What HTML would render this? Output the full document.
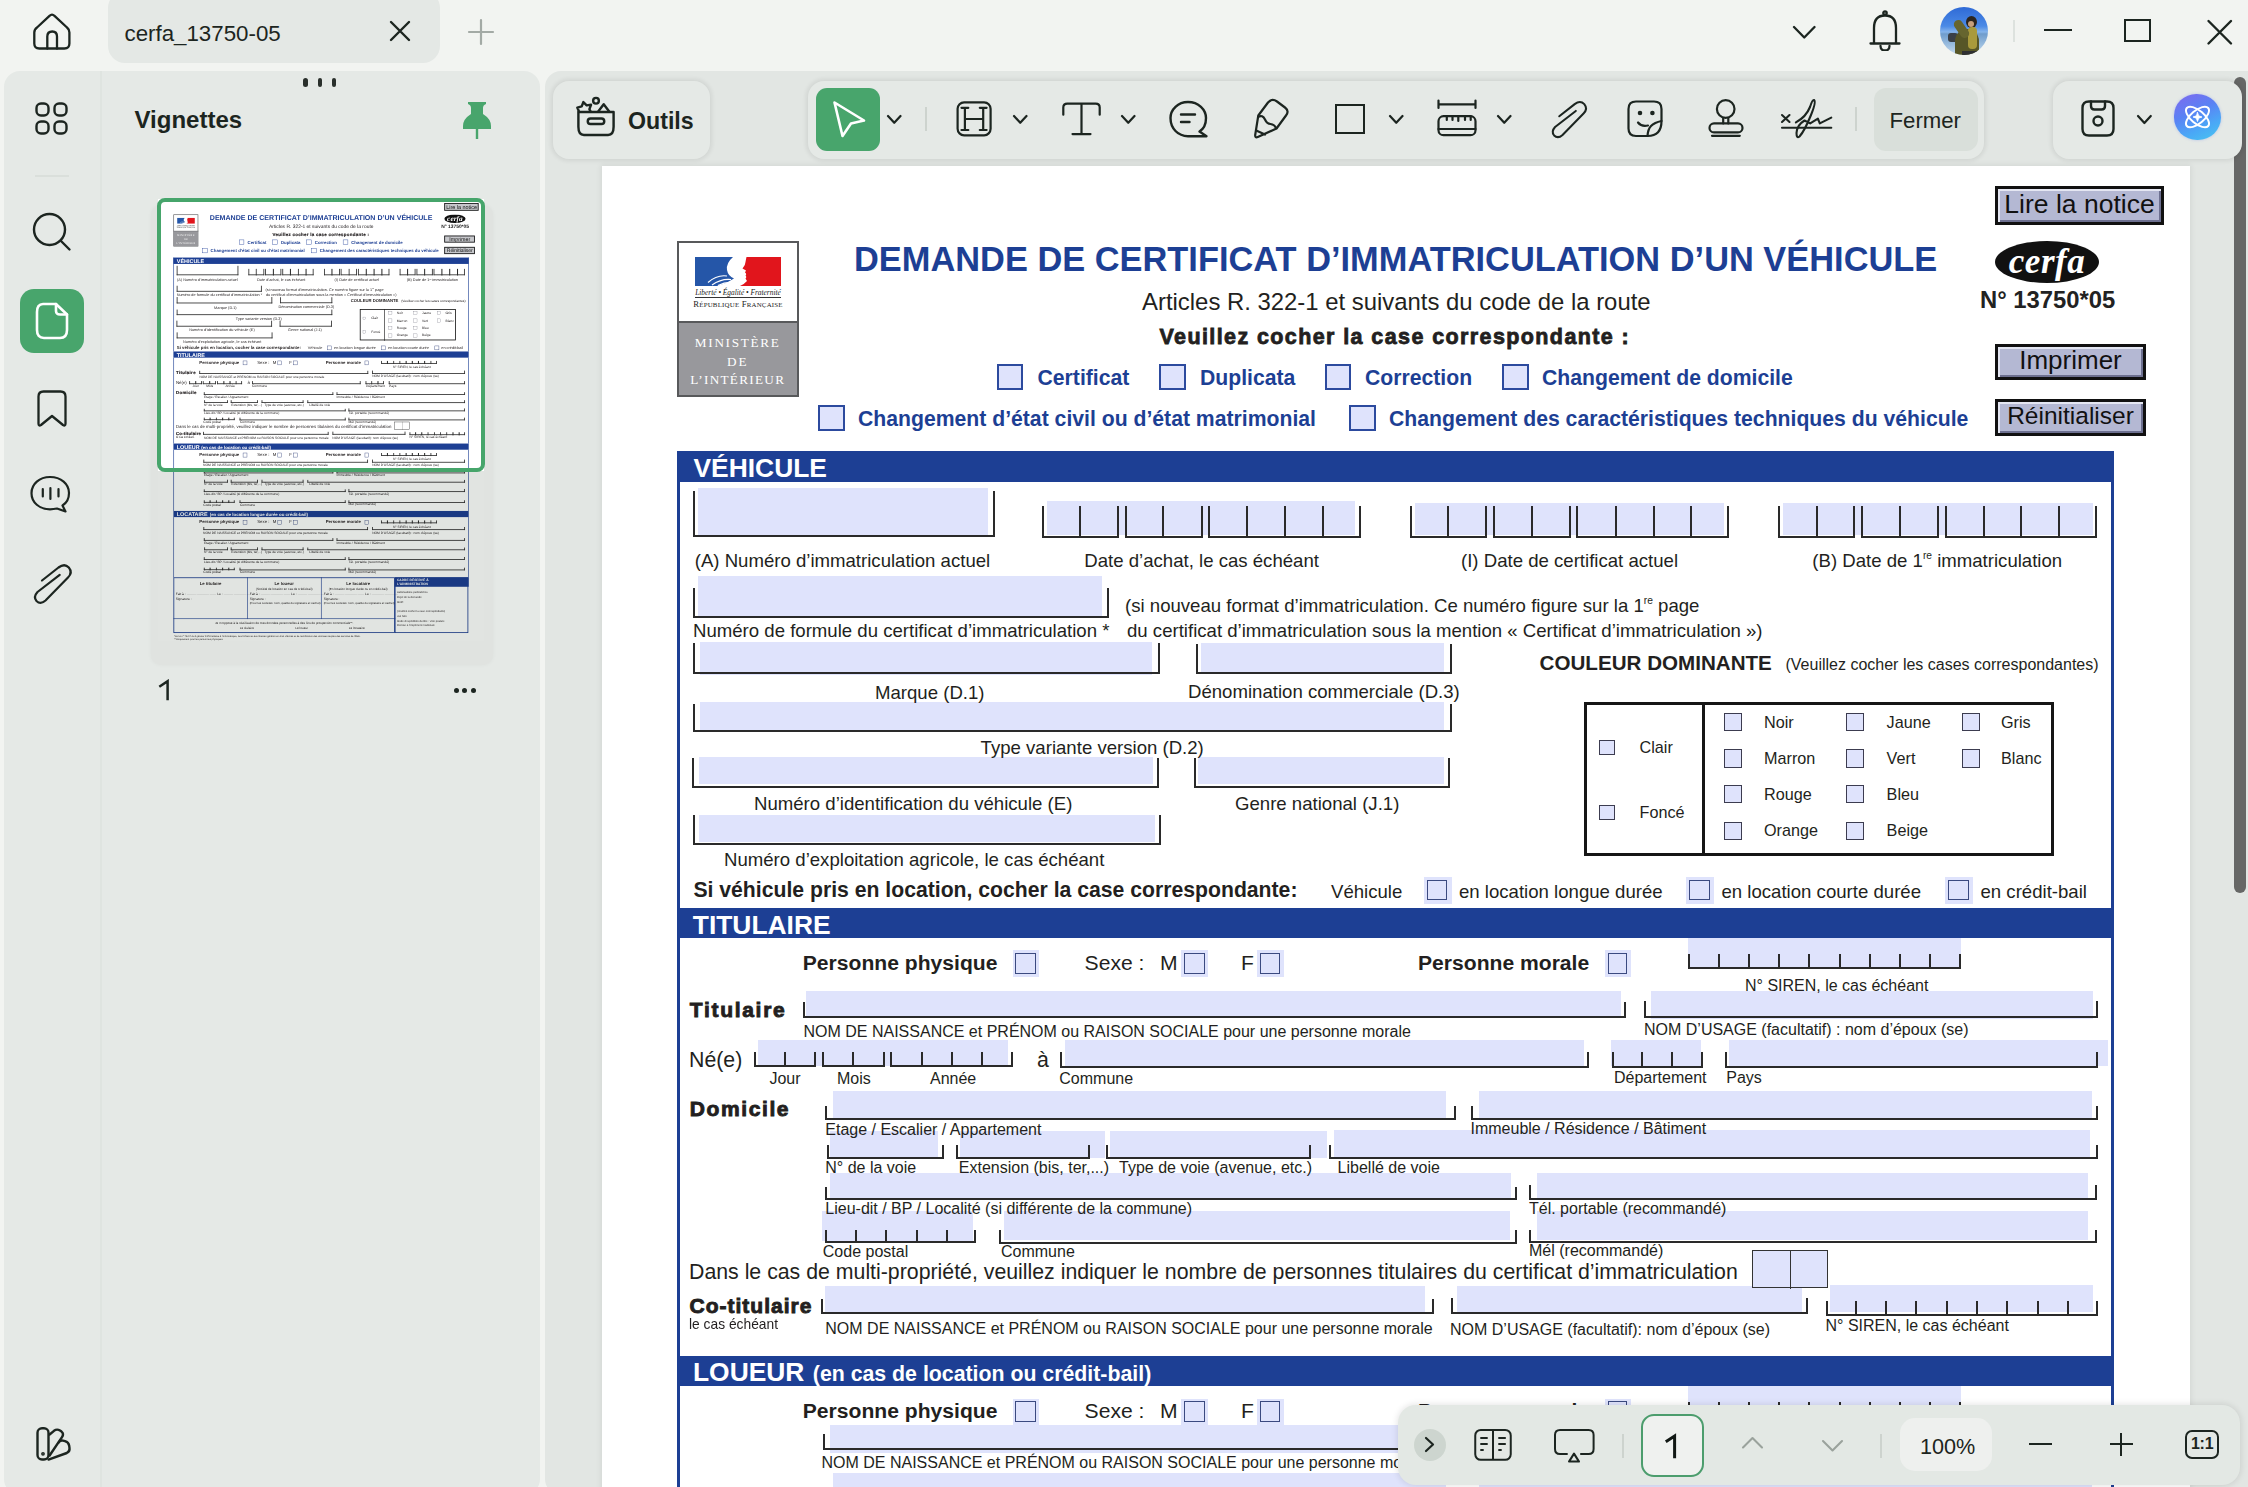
<!DOCTYPE html>
<html><head><meta charset="utf-8"><style>
*{margin:0;padding:0;box-sizing:content-box}
html,body{width:2248px;height:1487px;overflow:hidden;background:#f2f4f1;font-family:"Liberation Sans",sans-serif}
.t{position:absolute;white-space:nowrap;line-height:1.15}
.pg{position:absolute;left:0;top:0;width:1588px;height:2152px;background:#fff}
.pg i,.pg b,.pg svg{position:absolute;display:block}
.pg b{z-index:2;font-weight:400;white-space:nowrap;line-height:normal;color:#231f20}
.pg sup{font-size:0.55em;vertical-align:0.75em;line-height:0}
.thumb .pg i[style*="#dfe3fc"]{background:transparent!important}
.thumb .pg{text-rendering:geometricPrecision}
.thumb .pg i[style*="#b4b8d3"]{background:#c6c7cb!important;box-shadow:none!important}
</style></head><body>
<svg style="position:absolute;left:32px;top:11px;" width="40" height="40" viewBox="0 0 40 40" fill="none" stroke="#1c2520" stroke-width="2.3" stroke-linecap="round" stroke-linejoin="round"><path d="M5 16.5 L17.5 4.8 Q20 2.5 22.5 4.8 L35 16.5 Q37.4 18.5 37.4 21.5 V32.5 Q37.4 37.5 32.4 37.5 H7.3 Q2.3 37.5 2.3 32.5 V21.5 Q2.3 18.5 5 16.5 Z"/><path d="M15.3 37.5 V25.5 Q15.3 20.5 20.3 20.5 Q25 20.5 25 25.5 V37.5"/></svg>
<div style="position:absolute;left:108px;top:-9px;width:332px;height:72px;border-radius:17px;background:#e4e8e5"></div>
<div class="t" style="left:124.5px;top:20.5px;font-size:22.3px;color:#1c2520">cerfa_13750-05</div>
<svg style="position:absolute;left:388px;top:19px;" width="24" height="24" viewBox="0 0 24 24" fill="none" stroke="#1c2520" stroke-width="2.4" stroke-linecap="round" stroke-linejoin="round"><path d="M3 3 L21 21 M21 3 L3 21"/></svg>
<svg style="position:absolute;left:466px;top:18px;" width="30" height="28" viewBox="0 0 30 28" fill="none" stroke="#a3aaa5" stroke-width="2.2" stroke-linecap="round" stroke-linejoin="round"><path d="M15 2 V26 M3 14 H27"/></svg>
<svg style="position:absolute;left:1792px;top:24.5px" width="24.5" height="14.5" viewBox="-2 -2 24.5 14.5" fill="none" stroke="#1c2520" stroke-width="2.3" stroke-linecap="round" stroke-linejoin="round"><path d="M0 0 L10.25 10.5 L20.5 0"/></svg>
<svg style="position:absolute;left:1868px;top:9px;" width="34" height="42" viewBox="0 0 34 42" fill="none" stroke="#1c2520" stroke-width="2.3" stroke-linecap="round" stroke-linejoin="round"><circle cx="17" cy="4" r="1.7"/><path d="M6 34 V19 Q6 6.5 17 6.5 Q28 6.5 28 19 V34"/><path d="M2.5 34.5 H31.5"/><path d="M12.5 37 Q12.5 41.5 17 41.5 Q21.5 41.5 21.5 37"/></svg>
<div style="position:absolute;left:1940px;top:7px;width:48px;height:48px;border-radius:50%;overflow:hidden;background:linear-gradient(#2f6ad6 0%,#4b8ae6 40%,#86b4ea 52%,#6f9ccc 56%,#9dbfe0 80%,#c9dcee 100%)">
<div style="position:absolute;left:8px;top:26px;width:10px;height:9px;border-radius:3px;background:#3a4048"></div>
<div style="position:absolute;left:15px;top:22px;width:24px;height:34px;border-radius:12px 12px 2px 2px;background:#575627"></div>
<div style="position:absolute;left:26px;top:9px;width:11px;height:12px;border-radius:50%;background:#2c251e"></div>
<div style="position:absolute;left:28px;top:14px;width:6px;height:6px;border-radius:50%;background:#c79f7a"></div>
<div style="position:absolute;left:28px;top:20px;width:9px;height:22px;border-radius:4px;background:#a99a3c"></div>
<div style="position:absolute;left:17px;top:12px;width:9px;height:20px;border-radius:5px;background:#66652f;transform:rotate(-35deg)"></div>
<div style="position:absolute;left:22px;top:44px;width:16px;height:10px;background:#2f3033"></div>
</div>
<div style="position:absolute;left:2013px;top:20px;width:1.5px;height:22px;background:#dde2de"></div>
<div style="position:absolute;left:2044px;top:29px;width:28px;height:2.4px;background:#1c2520"></div>
<div style="position:absolute;left:2124px;top:19px;width:23px;height:19px;border:2.6px solid #1c2520"></div>
<svg style="position:absolute;left:2205px;top:18px;" width="30" height="28" viewBox="0 0 30 28" fill="none" stroke="#1c2520" stroke-width="2.4" stroke-linecap="round" stroke-linejoin="round"><path d="M3.5 3 L26 25.5 M26 3 L3.5 25.5"/></svg>
<div style="position:absolute;left:4px;top:71px;width:536px;height:1424px;border-radius:16px;background:#e5e9e6"></div>
<div style="position:absolute;left:100px;top:71px;width:2px;height:1416px;background:#dfe4e0"></div>
<svg style="position:absolute;left:33px;top:100px;" width="38" height="38" viewBox="0 0 38 38" fill="none" stroke="#1c2520" stroke-width="2.4" stroke-linecap="round" stroke-linejoin="round"><rect x="3.5" y="3.5" width="12" height="12" rx="4.5"/><rect x="21.5" y="3.5" width="12" height="12" rx="4.5"/><rect x="3.5" y="21.5" width="12" height="12" rx="4.5"/><rect x="21.5" y="21.5" width="12" height="12" rx="4.5"/></svg>
<div style="position:absolute;left:35px;top:175px;width:34px;height:2px;background:#dadfdb"></div>
<svg style="position:absolute;left:31px;top:211px;" width="42" height="42" viewBox="0 0 42 42" fill="none" stroke="#1c2520" stroke-width="2.4" stroke-linecap="round" stroke-linejoin="round"><circle cx="18.5" cy="18.5" r="15.5"/><path d="M30 30 L38.5 38.5"/></svg>
<div style="position:absolute;left:20px;top:289px;width:64px;height:64px;border-radius:14px;background:#48a56c"></div>
<svg style="position:absolute;left:33px;top:301px;" width="38" height="40" viewBox="0 0 38 40" fill="none" stroke="#1c2520" stroke-width="2.6" stroke-linecap="round" stroke-linejoin="round"><path d="M10 3 H23 L34 13.5 V29 Q34 37 27 37 H11 Q4 37 4 29 V11 Q4 3 10 3 Z" stroke="#fff"/><path d="M23 3 V10 Q23 13.5 27 13.5 H34" stroke="#fff"/></svg>
<svg style="position:absolute;left:35px;top:388px;" width="34" height="42" viewBox="0 0 34 42" fill="none" stroke="#1c2520" stroke-width="2.3" stroke-linecap="round" stroke-linejoin="round"><path d="M8.5 3.5 H25.5 Q30.5 3.5 30.5 8.5 V35.5 Q30.5 38.5 28 37 L17 28 L6 37 Q3.5 38.5 3.5 35.5 V8.5 Q3.5 3.5 8.5 3.5 Z"/></svg>
<svg style="position:absolute;left:29px;top:474px;" width="44" height="42" viewBox="0 0 44 42" fill="none" stroke="#1c2520" stroke-width="2.2" stroke-linecap="round" stroke-linejoin="round"><path d="M21 3 C32 3 40 10 40 19 C40 24.5 37.5 29 33.5 31.5 L36.5 37.5 L28 34.5 C25.8 35 23.5 35.3 21 35.3 C10.5 35.3 2.5 28.5 2.5 19.2 C2.5 10 10.5 3 21 3 Z"/><path d="M13.8 15 V22.5 M21.4 14 V25 M29.5 15 V22.5"/></svg>
<svg style="position:absolute;left:30px;top:560px;" width="46" height="48" viewBox="0 0 46 48" fill="none" stroke="#1c2520" stroke-width="2.2" stroke-linecap="round" stroke-linejoin="round"><path d="M12 20.5 L28.5 7.5 Q34.5 3 38.8 7.5 Q43 12.5 38 17.5 L15.5 40.5 Q10.5 45 6.5 41 Q3 37 7.5 32 L29.7 14.8"/></svg>
<svg style="position:absolute;left:30px;top:1420px;" width="46" height="46" viewBox="0 0 46 46" fill="none" stroke="#1c2520" stroke-width="2.4" stroke-linecap="round" stroke-linejoin="round"><rect x="7.5" y="8.3" width="11" height="31.2" rx="4.5"/><path d="M19.6 14.5 L24 10.8 Q27 8.6 30 10.6 L31.5 11.6 Q34.2 13.9 32 17.2 L19.6 35.5"/><path d="M28.8 22.3 Q30.2 20.2 33 20.6 L35 21.2 Q38.6 22.3 39.2 25.8 L39.5 28.2 Q40 31.6 36.8 33 L18.5 39.6"/><circle cx="13" cy="33.8" r="0.7" fill="#1c2520"/></svg>
<div style="position:absolute;left:303px;top:78px;width:4.5px;height:9px;border-radius:3px;background:#2a302c"></div>
<div style="position:absolute;left:317.5px;top:78px;width:4.5px;height:9px;border-radius:3px;background:#2a302c"></div>
<div style="position:absolute;left:331.5px;top:78px;width:4.5px;height:9px;border-radius:3px;background:#2a302c"></div>
<div class="t" style="left:134.5px;top:106px;font-size:24px;font-weight:700;color:#1c2520">Vignettes</div>
<svg style="position:absolute;left:461px;top:99px" width="32" height="42" viewBox="0 0 32 42"><path d="M7 3 H25 V5 Q22 6 22 9 V15 Q30 20 30 27 V30 H2 V27 Q2 20 10 15 V9 Q10 6 7 5 Z" fill="#48a56c"/><rect x="14.8" y="29" width="2.4" height="11" fill="#48a56c"/></svg>
<div style="position:absolute;left:151px;top:205px;width:342px;height:460px;border-radius:10px;background:#e0e3e0;box-shadow:0 0 4px rgba(0,0,0,0.04)"></div>
<svg style="position:absolute;left:158px;top:679px" width="14" height="24" viewBox="0 0 14 24" fill="none" stroke="#1c2520" stroke-width="2.5" stroke-linejoin="miter"><path d="M1.3 7.8 L9.6 2.2 V21.3"/></svg>
<div style="position:absolute;left:453.8px;top:688px;width:5px;height:5px;border-radius:50%;background:#1c2520"></div>
<div style="position:absolute;left:462.3px;top:688px;width:5px;height:5px;border-radius:50%;background:#1c2520"></div>
<div style="position:absolute;left:470.8px;top:688px;width:5px;height:5px;border-radius:50%;background:#1c2520"></div>
<div style="position:absolute;left:545px;top:71px;width:1720px;height:1424px;border-radius:16px;background:#e2e6e3"></div>
<div style="position:absolute;left:602px;top:166px;width:1588px;height:1330px;box-shadow:0 0 6px 1px rgba(0,0,0,0.07)"></div>
<div style="position:absolute;left:602px;top:166px;width:1588px;height:1321px;overflow:hidden;z-index:0">
<div class="pg">
<i style="left:96px;top:322px;width:289.7px;height:47px;background:#dfe3fc;"></i>
<i style="left:444.7px;top:335px;width:308.3px;height:34px;background:#dfe3fc;"></i>
<i style="left:813px;top:337px;width:308.6px;height:32px;background:#dfe3fc;"></i>
<i style="left:1181px;top:337px;width:310.3px;height:32px;background:#dfe3fc;"></i>
<i style="left:96px;top:409.7px;width:403.7px;height:41px;background:#dfe3fc;"></i>
<i style="left:98px;top:475.7px;width:452px;height:33.3px;background:#dfe3fc;"></i>
<i style="left:599px;top:476.6px;width:243px;height:29.4px;background:#dfe3fc;"></i>
<i style="left:98px;top:536px;width:744px;height:28px;background:#dfe3fc;"></i>
<i style="left:97px;top:591px;width:454px;height:27px;background:#dfe3fc;"></i>
<i style="left:596px;top:591px;width:246px;height:27px;background:#dfe3fc;"></i>
<i style="left:97px;top:649px;width:456px;height:27px;background:#dfe3fc;"></i>
<i style="left:821.7px;top:711px;width:28px;height:27px;background:#dfe3fc;"></i>
<i style="left:1084px;top:711px;width:28px;height:27px;background:#dfe3fc;"></i>
<i style="left:1343px;top:711px;width:28px;height:27px;background:#dfe3fc;"></i>
<i style="left:410.9px;top:784.2px;width:26.6px;height:27.1px;background:#dfe3fc;"></i>
<i style="left:579.2px;top:784.2px;width:27.1px;height:27.1px;background:#dfe3fc;"></i>
<i style="left:655.1px;top:784.2px;width:26.8px;height:27.1px;background:#dfe3fc;"></i>
<i style="left:1003px;top:784.2px;width:25.5px;height:27.1px;background:#dfe3fc;"></i>
<i style="left:1086px;top:771.7px;width:273px;height:30.3px;background:#dfe3fc;"></i>
<i style="left:204px;top:824.7px;width:814.7px;height:25.3px;background:#dfe3fc;"></i>
<i style="left:1048.8px;top:824.5px;width:442.2px;height:28.3px;background:#dfe3fc;"></i>
<i style="left:155.8px;top:873.8px;width:250.6px;height:26.2px;background:#dfe3fc;"></i>
<i style="left:463px;top:874px;width:518.7px;height:26px;background:#dfe3fc;"></i>
<i style="left:1009px;top:874px;width:89.6px;height:26px;background:#dfe3fc;"></i>
<i style="left:1127px;top:874px;width:379px;height:26px;background:#dfe3fc;"></i>
<i style="left:231.4px;top:925px;width:613.1px;height:27px;background:#dfe3fc;"></i>
<i style="left:877px;top:925px;width:613px;height:27px;background:#dfe3fc;"></i>
<i style="left:228px;top:965px;width:107.7px;height:27px;background:#dfe3fc;"></i>
<i style="left:358px;top:965px;width:144.6px;height:27px;background:#dfe3fc;"></i>
<i style="left:508px;top:965px;width:217px;height:27px;background:#dfe3fc;"></i>
<i style="left:732px;top:964px;width:756px;height:27.5px;background:#dfe3fc;"></i>
<i style="left:228px;top:1006.6px;width:680.5px;height:26.4px;background:#dfe3fc;"></i>
<i style="left:935px;top:1006.6px;width:551.4px;height:26.4px;background:#dfe3fc;"></i>
<i style="left:220px;top:1045px;width:151px;height:30px;background:#dfe3fc;"></i>
<i style="left:401.8px;top:1045px;width:506.7px;height:29px;background:#dfe3fc;"></i>
<i style="left:935px;top:1045px;width:551.4px;height:29px;background:#dfe3fc;"></i>
<i style="left:222.6px;top:1120px;width:600.8px;height:26px;background:#dfe3fc;"></i>
<i style="left:854.6px;top:1120px;width:345.1px;height:26.6px;background:#dfe3fc;"></i>
<i style="left:1228px;top:1119.4px;width:263px;height:26.6px;background:#dfe3fc;"></i>
<i style="left:410.9px;top:1232.7px;width:26.6px;height:27.1px;background:#dfe3fc;"></i>
<i style="left:579.2px;top:1232.7px;width:27.1px;height:27.1px;background:#dfe3fc;"></i>
<i style="left:655.1px;top:1232.7px;width:26.8px;height:27.1px;background:#dfe3fc;"></i>
<i style="left:1003px;top:1232.7px;width:25.5px;height:27.1px;background:#dfe3fc;"></i>
<i style="left:1086px;top:1219.7px;width:273px;height:30.3px;background:#dfe3fc;"></i>
<i style="left:227.8px;top:1259px;width:790.2px;height:28px;background:#dfe3fc;"></i>
<i style="left:1048px;top:1259px;width:443px;height:28px;background:#dfe3fc;"></i>
<i style="left:231.4px;top:1307px;width:613.1px;height:27px;background:#dfe3fc;"></i>
<i style="left:877px;top:1307px;width:613px;height:27px;background:#dfe3fc;"></i>
<i style="left:228px;top:1352.5px;width:107.7px;height:27px;background:#dfe3fc;"></i>
<i style="left:358px;top:1352.5px;width:144.6px;height:27px;background:#dfe3fc;"></i>
<i style="left:508px;top:1352.5px;width:217px;height:27px;background:#dfe3fc;"></i>
<i style="left:732px;top:1351.5px;width:756px;height:27.5px;background:#dfe3fc;"></i>
<i style="left:228px;top:1399px;width:680.5px;height:26.4px;background:#dfe3fc;"></i>
<i style="left:935px;top:1399px;width:551.4px;height:26.4px;background:#dfe3fc;"></i>
<i style="left:220px;top:1447px;width:151px;height:30px;background:#dfe3fc;"></i>
<i style="left:401.8px;top:1447px;width:506.7px;height:29px;background:#dfe3fc;"></i>
<i style="left:935px;top:1447px;width:551.4px;height:29px;background:#dfe3fc;"></i>
<i style="left:410.9px;top:1561px;width:26.6px;height:27.1px;background:#dfe3fc;"></i>
<i style="left:579.2px;top:1561px;width:27.1px;height:27.1px;background:#dfe3fc;"></i>
<i style="left:655.1px;top:1561px;width:26.8px;height:27.1px;background:#dfe3fc;"></i>
<i style="left:1003px;top:1561px;width:25.5px;height:27.1px;background:#dfe3fc;"></i>
<i style="left:1086px;top:1548px;width:273px;height:30.3px;background:#dfe3fc;"></i>
<i style="left:227.8px;top:1587.3px;width:790.2px;height:28px;background:#dfe3fc;"></i>
<i style="left:1048px;top:1587.3px;width:443px;height:28px;background:#dfe3fc;"></i>
<i style="left:231.4px;top:1635.3px;width:613.1px;height:27px;background:#dfe3fc;"></i>
<i style="left:877px;top:1635.3px;width:613px;height:27px;background:#dfe3fc;"></i>
<i style="left:228px;top:1681.8px;width:107.7px;height:27px;background:#dfe3fc;"></i>
<i style="left:358px;top:1681.8px;width:144.6px;height:27px;background:#dfe3fc;"></i>
<i style="left:508px;top:1681.8px;width:217px;height:27px;background:#dfe3fc;"></i>
<i style="left:732px;top:1680.8px;width:756px;height:27.5px;background:#dfe3fc;"></i>
<i style="left:228px;top:1729.3px;width:680.5px;height:26.4px;background:#dfe3fc;"></i>
<i style="left:935px;top:1729.3px;width:551.4px;height:26.4px;background:#dfe3fc;"></i>
<i style="left:220px;top:1775.3px;width:151px;height:30px;background:#dfe3fc;"></i>
<i style="left:401.8px;top:1775.3px;width:506.7px;height:29px;background:#dfe3fc;"></i>
<i style="left:935px;top:1775.3px;width:551.4px;height:29px;background:#dfe3fc;"></i>
<i style="left:75px;top:75px;width:117.5px;height:152px;border:2.0px solid #58595b;background:#fff"></i>
<i style="left:77px;top:156px;width:117.5px;height:73px;background:#98989c;"></i>
<i style="left:75px;top:154.5px;width:121.5px;height:2px;background:#58595b;"></i>
<svg class="flag" style="left:93px;top:91px" width="87" height="30" viewBox="0 0 87 30"><path d="M0 0 H38 Q31 6 32 13 Q33 19 39 21.5 L31 26 L22 29 H0 Z" fill="#2556a8"/><path d="M13 25.5 Q22 17.5 32 19 M17 28 Q26 21.5 36 22.5 M23 28.5 Q30 25 37 25.5" stroke="#fff" stroke-width="1.2" fill="none"/><path d="M51.5 0 H86 V29 H45 Q50 26.5 52 24 L50.5 21.5 Q52 20 50.5 18.5 Q52 17 50 15.5 L51 13.5 L47.5 11.5 Q50.5 8 50.5 5 Q51 2 51.5 0 Z" fill="#e1151c"/></svg>
<b style="left:136px;top:121.6px;font-size:7.4px;color:#222;font-style:italic;font-family:'Liberation Serif';transform:translateX(-50%);">Liberté • Égalité • Fraternité</b>
<i style="left:93px;top:131px;width:86px;height:1.2px;background:#333;"></i>
<b style="left:136px;top:133.1px;font-size:8.7px;color:#222;font-family:'Liberation Serif';transform:translateX(-50%);letter-spacing:0.2px">R<span style="font-size:6.9px">ÉPUBLIQUE</span> F<span style="font-size:6.9px">RANÇAISE</span></b>
<b style="left:135.7px;top:169.1px;font-size:13.2px;color:#fff;font-family:'Liberation Serif';transform:translateX(-50%);letter-spacing:1.7px">MINISTÈRE</b>
<b style="left:135.7px;top:187.6px;font-size:13.2px;color:#fff;font-family:'Liberation Serif';transform:translateX(-50%);letter-spacing:1.9px">DE</b>
<b style="left:135.7px;top:206.1px;font-size:13.2px;color:#fff;font-family:'Liberation Serif';transform:translateX(-50%);letter-spacing:1.3px">L’INTÉRIEUR</b>
<b style="left:252px;top:74.2px;font-size:34.4px;font-weight:700;color:#1d3f94;">DEMANDE DE CERTIFICAT D’IMMATRICULATION D’UN VÉHICULE</b>
<b style="left:540px;top:121.7px;font-size:23.9px;">Articles R. 322-1 et suivants du code de la route</b>
<b style="left:557.5px;top:158.5px;font-size:21.5px;font-weight:700;letter-spacing:1.4px;-webkit-text-stroke:0.8px #231f20;">Veuillez cocher la case correspondante :</b>
<i style="left:394.6px;top:198px;width:22.5px;height:22px;border:2.0px solid #2c4a9e;background:#dfe3fc"></i>
<i style="left:557.4px;top:198px;width:22.5px;height:22px;border:2.0px solid #2c4a9e;background:#dfe3fc"></i>
<i style="left:722.8px;top:198px;width:22.5px;height:22px;border:2.0px solid #2c4a9e;background:#dfe3fc"></i>
<i style="left:900px;top:198px;width:22.5px;height:22px;border:2.0px solid #2c4a9e;background:#dfe3fc"></i>
<b style="left:435.5px;top:200.1px;font-size:21.2px;font-weight:700;color:#1d3f94;">Certificat</b>
<b style="left:598px;top:200.1px;font-size:21.2px;font-weight:700;color:#1d3f94;">Duplicata</b>
<b style="left:763px;top:200.1px;font-size:21.2px;font-weight:700;color:#1d3f94;">Correction</b>
<b style="left:940px;top:200.1px;font-size:21.2px;font-weight:700;color:#1d3f94;">Changement de domicile</b>
<i style="left:216px;top:239px;width:22.5px;height:22px;border:2.0px solid #2c4a9e;background:#dfe3fc"></i>
<i style="left:747px;top:239px;width:22.5px;height:22px;border:2.0px solid #2c4a9e;background:#dfe3fc"></i>
<b style="left:256px;top:240.6px;font-size:21.2px;font-weight:700;color:#1d3f94;">Changement d’état civil ou d’état matrimonial</b>
<b style="left:787px;top:240.6px;font-size:21.2px;font-weight:700;color:#1d3f94;">Changement des caractéristiques techniques du véhicule</b>
<i style="left:1393px;top:19.5px;width:163px;height:33px;border:3.0px solid #111;background:#b4b8d3;box-shadow:inset 2px 2px 0 #e4e6f2, inset -2px -2px 0 #6d7090"></i>
<b style="left:1477.5px;top:23px;font-size:26.5px;color:#111;transform:translateX(-50%);">Lire la notice</b>
<i style="left:1393px;top:177.5px;width:145px;height:30.5px;border:3.0px solid #111;background:#b4b8d3;box-shadow:inset 2px 2px 0 #e4e6f2, inset -2px -2px 0 #6d7090"></i>
<b style="left:1468.5px;top:178.5px;font-size:26px;color:#111;transform:translateX(-50%);">Imprimer</b>
<i style="left:1393px;top:232.5px;width:145px;height:31px;border:3.0px solid #111;background:#b4b8d3;box-shadow:inset 2px 2px 0 #e4e6f2, inset -2px -2px 0 #6d7090"></i>
<b style="left:1468.5px;top:236.3px;font-size:24.5px;color:#111;transform:translateX(-50%);">Réinitialiser</b>
<svg style="left:1393px;top:75px" width="105" height="43" viewBox="0 0 105 43"><ellipse cx="52" cy="21" rx="52" ry="21" fill="#111"/></svg>
<b style="left:1445px;top:76.3px;font-size:35px;font-weight:700;color:#fff;font-family:'Liberation Serif';font-style:italic;transform:translateX(-50%);letter-spacing:0.5px">cerfa</b>
<b style="left:1378px;top:119.7px;font-size:23.8px;font-weight:700;color:#222;">N° 13750*05</b>
<i style="left:75.3px;top:285px;width:1436.7px;height:30.5px;background:#1d3f94;"></i>
<i style="left:75.3px;top:285px;width:3px;height:457px;background:#1d3f94;"></i>
<i style="left:1509px;top:285px;width:3px;height:457px;background:#1d3f94;"></i>
<b style="left:91.5px;top:287.1px;font-size:26.4px;font-weight:700;color:#fff;">VÉHICULE</b>
<i style="left:91px;top:324.7px;width:298px;height:44.8px;border:2.0px solid #2a2a2a;border-top:0"></i>
<i style="left:440px;top:340px;width:73.3px;height:29.5px;border:2.0px solid #2a2a2a;border-top:0"></i>
<i style="left:477px;top:340px;width:2.0px;height:31.5px;background:#2a2a2a"></i>
<i style="left:522.7px;top:340px;width:74px;height:29.5px;border:2.0px solid #2a2a2a;border-top:0"></i>
<i style="left:560.3px;top:340px;width:2.0px;height:31.5px;background:#2a2a2a"></i>
<i style="left:606px;top:340px;width:148.7px;height:29.5px;border:2.0px solid #2a2a2a;border-top:0"></i>
<i style="left:643.7px;top:340px;width:2.0px;height:31.5px;background:#2a2a2a"></i>
<i style="left:682px;top:340px;width:2.0px;height:31.5px;background:#2a2a2a"></i>
<i style="left:719.7px;top:340px;width:2.0px;height:31.5px;background:#2a2a2a"></i>
<i style="left:808.2px;top:340px;width:72.8px;height:29.5px;border:2.0px solid #2a2a2a;border-top:0"></i>
<i style="left:845.3px;top:340px;width:2.0px;height:31.5px;background:#2a2a2a"></i>
<i style="left:890.5px;top:340px;width:74.2px;height:29.5px;border:2.0px solid #2a2a2a;border-top:0"></i>
<i style="left:929px;top:340px;width:2.0px;height:31.5px;background:#2a2a2a"></i>
<i style="left:974.3px;top:340px;width:149px;height:29.5px;border:2.0px solid #2a2a2a;border-top:0"></i>
<i style="left:1012.8px;top:340px;width:2.0px;height:31.5px;background:#2a2a2a"></i>
<i style="left:1050.5px;top:340px;width:2.0px;height:31.5px;background:#2a2a2a"></i>
<i style="left:1088.2px;top:340px;width:2.0px;height:31.5px;background:#2a2a2a"></i>
<i style="left:1176.4px;top:340px;width:73.1px;height:29.5px;border:2.0px solid #2a2a2a;border-top:0"></i>
<i style="left:1213.8px;top:340px;width:2.0px;height:31.5px;background:#2a2a2a"></i>
<i style="left:1259px;top:340px;width:74.3px;height:29.5px;border:2.0px solid #2a2a2a;border-top:0"></i>
<i style="left:1296.8px;top:340px;width:2.0px;height:31.5px;background:#2a2a2a"></i>
<i style="left:1342.8px;top:340px;width:148.2px;height:29.5px;border:2.0px solid #2a2a2a;border-top:0"></i>
<i style="left:1380.6px;top:340px;width:2.0px;height:31.5px;background:#2a2a2a"></i>
<i style="left:1418.3px;top:340px;width:2.0px;height:31.5px;background:#2a2a2a"></i>
<i style="left:1456.4px;top:340px;width:2.0px;height:31.5px;background:#2a2a2a"></i>
<b style="left:92.7px;top:383.8px;font-size:18.6px;">(A) Numéro d’immatriculation actuel</b>
<b style="left:482.3px;top:383.8px;font-size:18.6px;">Date d’achat, le cas échéant</b>
<b style="left:859px;top:383.7px;font-size:18.6px;">(I) Date de certificat actuel</b>
<b style="left:1210.3px;top:383.7px;font-size:18.6px;">(B) Date de 1<sup>re</sup> immatriculation</b>
<i style="left:91px;top:421.7px;width:412px;height:28.3px;border:2.0px solid #2a2a2a;border-top:0"></i>
<b style="left:91px;top:453.9px;font-size:18.6px;">Numéro de formule du certificat d’immatriculation *</b>
<b style="left:523px;top:428.8px;font-size:18.6px;">(si nouveau format d’immatriculation. Ce numéro figure sur la 1<sup>re</sup> page</b>
<b style="left:525px;top:453.5px;font-size:18.6px;">du certificat d’immatriculation sous la mention « Certificat d’immatriculation »)</b>
<i style="left:91px;top:477.3px;width:463px;height:29.2px;border:2.0px solid #2a2a2a;border-top:0"></i>
<i style="left:593.7px;top:477.7px;width:252px;height:28.3px;border:2.0px solid #2a2a2a;border-top:0"></i>
<b style="left:273px;top:515.5px;font-size:18.6px;">Marque (D.1)</b>
<b style="left:586px;top:515px;font-size:18.6px;">Dénomination commerciale (D.3)</b>
<b style="left:937.6px;top:485.4px;font-size:20.6px;font-weight:700;">COULEUR DOMINANTE</b>
<b style="left:1183.5px;top:489.5px;font-size:16px;">(Veuillez cocher les cases correspondantes)</b>
<i style="left:91.4px;top:538px;width:754.6px;height:25.5px;border:2.0px solid #2a2a2a;border-top:0"></i>
<b style="left:378.6px;top:571.2px;font-size:18.6px;">Type variante version (D.2)</b>
<i style="left:89.6px;top:592px;width:463.4px;height:28px;border:2.0px solid #2a2a2a;border-top:0"></i>
<i style="left:592px;top:592px;width:252px;height:28px;border:2.0px solid #2a2a2a;border-top:0"></i>
<b style="left:152px;top:627.2px;font-size:18.6px;">Numéro d’identification du véhicule (E)</b>
<b style="left:633px;top:627.2px;font-size:18.6px;">Genre national (J.1)</b>
<i style="left:91px;top:649px;width:464px;height:28px;border:2.0px solid #2a2a2a;border-top:0"></i>
<b style="left:122px;top:683px;font-size:18.6px;">Numéro d’exploitation agricole, le cas échéant</b>
<b style="left:91.4px;top:712.3px;font-size:21.2px;font-weight:700;">Si véhicule pris en location, cocher la case correspondante:</b>
<b style="left:729px;top:714.7px;font-size:18.6px;">Véhicule</b>
<b style="left:857px;top:714.7px;font-size:18.6px;">en location longue durée</b>
<b style="left:1119.5px;top:714.7px;font-size:18.6px;">en location courte durée</b>
<b style="left:1378.5px;top:714.7px;font-size:18.6px;">en crédit-bail</b>
<i style="left:824.7px;top:714px;width:18.8px;height:17.8px;border:1.6px solid #3b4a80;background:#dfe3fc"></i>
<i style="left:1087px;top:714px;width:18.8px;height:17.8px;border:1.6px solid #3b4a80;background:#dfe3fc"></i>
<i style="left:1346px;top:714px;width:18.8px;height:17.8px;border:1.6px solid #3b4a80;background:#dfe3fc"></i>
<i style="left:981.5px;top:535.5px;width:464.5px;height:148.5px;border:3.0px solid #161616;"></i>
<i style="left:1099.5px;top:535.5px;width:3px;height:154.5px;background:#161616;"></i>
<i style="left:997px;top:573.5px;width:13.9px;height:13.9px;border:1.3px solid #3c3c50;background:#dfe3fc"></i>
<i style="left:997px;top:638.5px;width:13.9px;height:13.9px;border:1.3px solid #3c3c50;background:#dfe3fc"></i>
<b style="left:1037.5px;top:572.1px;font-size:16.2px;">Clair</b>
<b style="left:1037.5px;top:637px;font-size:16.2px;">Foncé</b>
<i style="left:1122px;top:547px;width:16.4px;height:16.4px;border:1.3px solid #3c3c50;background:#dfe3fc"></i>
<b style="left:1162px;top:547.1px;font-size:16.2px;">Noir</b>
<i style="left:1122px;top:583.4px;width:16.4px;height:16.4px;border:1.3px solid #3c3c50;background:#dfe3fc"></i>
<b style="left:1162px;top:583px;font-size:16.2px;">Marron</b>
<i style="left:1122px;top:619px;width:16.4px;height:16.4px;border:1.3px solid #3c3c50;background:#dfe3fc"></i>
<b style="left:1162px;top:618.9px;font-size:16.2px;">Rouge</b>
<i style="left:1122px;top:655.8px;width:16.4px;height:16.4px;border:1.3px solid #3c3c50;background:#dfe3fc"></i>
<b style="left:1162px;top:654.9px;font-size:16.2px;">Orange</b>
<i style="left:1244px;top:547px;width:16.4px;height:16.4px;border:1.3px solid #3c3c50;background:#dfe3fc"></i>
<b style="left:1284.6px;top:547.1px;font-size:16.2px;">Jaune</b>
<i style="left:1244px;top:583.4px;width:16.4px;height:16.4px;border:1.3px solid #3c3c50;background:#dfe3fc"></i>
<b style="left:1284.6px;top:583px;font-size:16.2px;">Vert</b>
<i style="left:1244px;top:619px;width:16.4px;height:16.4px;border:1.3px solid #3c3c50;background:#dfe3fc"></i>
<b style="left:1284.6px;top:618.9px;font-size:16.2px;">Bleu</b>
<i style="left:1244px;top:655.8px;width:16.4px;height:16.4px;border:1.3px solid #3c3c50;background:#dfe3fc"></i>
<b style="left:1284.6px;top:654.9px;font-size:16.2px;">Beige</b>
<i style="left:1359.7px;top:547px;width:16.4px;height:16.4px;border:1.3px solid #3c3c50;background:#dfe3fc"></i>
<b style="left:1399px;top:547.1px;font-size:16.2px;">Gris</b>
<i style="left:1359.7px;top:583.4px;width:16.4px;height:16.4px;border:1.3px solid #3c3c50;background:#dfe3fc"></i>
<b style="left:1399px;top:583px;font-size:16.2px;">Blanc</b>
<i style="left:75.3px;top:741.7px;width:1436.7px;height:29.9px;background:#1d3f94;"></i>
<i style="left:75.3px;top:771.6px;width:3px;height:418.4px;background:#1d3f94;"></i>
<i style="left:1509px;top:771.6px;width:3px;height:418.4px;background:#1d3f94;"></i>
<b style="left:90.8px;top:743.5px;font-size:26.4px;font-weight:700;color:#fff;">TITULAIRE</b>
<b style="left:200.8px;top:785.2px;font-size:21.1px;font-weight:700;">Personne physique</b>
<i style="left:413.4px;top:786.7px;width:18.4px;height:18.9px;border:1.6px solid #3b4a80;background:#dfe3fc"></i>
<b style="left:482.6px;top:785.2px;font-size:21.1px;">Sexe :</b>
<b style="left:558px;top:785.2px;font-size:21.1px;">M</b>
<i style="left:581.7px;top:786.7px;width:18.9px;height:18.9px;border:1.6px solid #3b4a80;background:#dfe3fc"></i>
<b style="left:639px;top:785.2px;font-size:21.1px;">F</b>
<i style="left:657.6px;top:786.7px;width:18.6px;height:18.9px;border:1.6px solid #3b4a80;background:#dfe3fc"></i>
<b style="left:816px;top:785.2px;font-size:21.1px;font-weight:700;">Personne morale</b>
<i style="left:1005.5px;top:786.7px;width:17.3px;height:18.9px;border:1.6px solid #3b4a80;background:#dfe3fc"></i>
<i style="left:1085.8px;top:787.6px;width:269.2px;height:13.4px;border:2.0px solid #2a2a2a;border-top:0"></i>
<i style="left:1115.7px;top:787.6px;width:2.0px;height:15.4px;background:#2a2a2a"></i>
<i style="left:1146px;top:787.6px;width:2.0px;height:15.4px;background:#2a2a2a"></i>
<i style="left:1176px;top:787.6px;width:2.0px;height:15.4px;background:#2a2a2a"></i>
<i style="left:1206.3px;top:787.6px;width:2.0px;height:15.4px;background:#2a2a2a"></i>
<i style="left:1236.5px;top:787.6px;width:2.0px;height:15.4px;background:#2a2a2a"></i>
<i style="left:1266.6px;top:787.6px;width:2.0px;height:15.4px;background:#2a2a2a"></i>
<i style="left:1296.8px;top:787.6px;width:2.0px;height:15.4px;background:#2a2a2a"></i>
<i style="left:1327px;top:787.6px;width:2.0px;height:15.4px;background:#2a2a2a"></i>
<b style="left:1143px;top:811.2px;font-size:16px;">N° SIREN, le cas échéant</b>
<b style="left:87.8px;top:832px;font-size:21px;font-weight:700;letter-spacing:1.7px;-webkit-text-stroke:0.9px #231f20;">Titulaire</b>
<i style="left:200.5px;top:836px;width:819.8px;height:13.5px;border:2.0px solid #2a2a2a;border-top:0"></i>
<i style="left:1042.4px;top:835px;width:449.5px;height:14.5px;border:2.0px solid #2a2a2a;border-top:0"></i>
<b style="left:201.5px;top:856.5px;font-size:16px;">NOM DE NAISSANCE et PRÉNOM ou RAISON SOCIALE pour une personne morale</b>
<b style="left:1042px;top:855.3px;font-size:16px;">NOM D’USAGE (facultatif) : nom d’époux (se)</b>
<b style="left:87px;top:881.7px;font-size:21.3px;">Né(e)</b>
<i style="left:152.3px;top:885.8px;width:57.8px;height:13.7px;border:2.0px solid #2a2a2a;border-top:0"></i>
<i style="left:182.2px;top:885.8px;width:2.0px;height:15.7px;background:#2a2a2a"></i>
<i style="left:219.8px;top:885.8px;width:58.8px;height:13.7px;border:2.0px solid #2a2a2a;border-top:0"></i>
<i style="left:250.4px;top:885.8px;width:2.0px;height:15.7px;background:#2a2a2a"></i>
<i style="left:288.4px;top:885.8px;width:118.2px;height:13.7px;border:2.0px solid #2a2a2a;border-top:0"></i>
<i style="left:319.3px;top:885.8px;width:2.0px;height:15.7px;background:#2a2a2a"></i>
<i style="left:349.2px;top:885.8px;width:2.0px;height:15.7px;background:#2a2a2a"></i>
<i style="left:379px;top:885.8px;width:2.0px;height:15.7px;background:#2a2a2a"></i>
<b style="left:167.4px;top:904px;font-size:16px;">Jour</b>
<b style="left:235px;top:904px;font-size:16px;">Mois</b>
<b style="left:328px;top:904px;font-size:16px;">Année</b>
<b style="left:435px;top:881.7px;font-size:21.3px;">à</b>
<i style="left:458px;top:886px;width:525.4px;height:13.5px;border:2.0px solid #2a2a2a;border-top:0"></i>
<b style="left:457.3px;top:904px;font-size:16px;">Commune</b>
<i style="left:1010px;top:886px;width:87px;height:13.5px;border:2.0px solid #2a2a2a;border-top:0"></i>
<i style="left:1039px;top:886px;width:2.0px;height:15.5px;background:#2a2a2a"></i>
<i style="left:1069.4px;top:886px;width:2.0px;height:15.5px;background:#2a2a2a"></i>
<b style="left:1012px;top:903.2px;font-size:16px;">Département</b>
<i style="left:1123px;top:886px;width:369px;height:13.5px;border:2.0px solid #2a2a2a;border-top:0"></i>
<b style="left:1124.3px;top:903.2px;font-size:16px;">Pays</b>
<b style="left:87.8px;top:930.6px;font-size:21px;font-weight:700;letter-spacing:1.6px;-webkit-text-stroke:0.9px #231f20;">Domicile</b>
<i style="left:222.6px;top:939.8px;width:627.9px;height:12.2px;border:2.0px solid #2a2a2a;border-top:0"></i>
<i style="left:868.5px;top:939.8px;width:623.5px;height:12.2px;border:2.0px solid #2a2a2a;border-top:0"></i>
<b style="left:223.3px;top:954.5px;font-size:16px;">Etage / Escalier / Appartement</b>
<b style="left:868.5px;top:954px;font-size:16px;">Immeuble / Résidence / Bâtiment</b>
<i style="left:225px;top:978.5px;width:113px;height:12.5px;border:2.0px solid #2a2a2a;border-top:0"></i>
<i style="left:354.4px;top:978.5px;width:129.6px;height:12.5px;border:2.0px solid #2a2a2a;border-top:0"></i>
<i style="left:503.7px;top:978.5px;width:201.6px;height:12.5px;border:2.0px solid #2a2a2a;border-top:0"></i>
<i style="left:726.8px;top:979.3px;width:765.2px;height:12.2px;border:2.0px solid #2a2a2a;border-top:0"></i>
<b style="left:223.3px;top:993.3px;font-size:16px;">N° de la voie</b>
<b style="left:356.8px;top:993.3px;font-size:16px;">Extension (bis, ter,...)</b>
<b style="left:517px;top:993.3px;font-size:16px;">Type de voie (avenue, etc.)</b>
<b style="left:735.6px;top:993.3px;font-size:16px;">Libellé de voie</b>
<i style="left:223.3px;top:1020.6px;width:687.7px;height:11.4px;border:2.0px solid #2a2a2a;border-top:0"></i>
<i style="left:927.4px;top:1019px;width:563.3px;height:13px;border:2.0px solid #2a2a2a;border-top:0"></i>
<b style="left:223.3px;top:1034.2px;font-size:16px;">Lieu-dit / BP / Localité (si différente de la commune)</b>
<b style="left:927px;top:1034px;font-size:16px;">Tél. portable (recommandé)</b>
<i style="left:223.3px;top:1063.5px;width:147.1px;height:11.5px;border:2.0px solid #2a2a2a;border-top:0"></i>
<i style="left:252.5px;top:1063.5px;width:2.0px;height:13.5px;background:#2a2a2a"></i>
<i style="left:283px;top:1063.5px;width:2.0px;height:13.5px;background:#2a2a2a"></i>
<i style="left:313.7px;top:1063.5px;width:2.0px;height:13.5px;background:#2a2a2a"></i>
<i style="left:343.5px;top:1063.5px;width:2.0px;height:13.5px;background:#2a2a2a"></i>
<i style="left:397.2px;top:1063.5px;width:513.8px;height:12px;border:2.0px solid #2a2a2a;border-top:0"></i>
<i style="left:927px;top:1063.6px;width:564px;height:11.9px;border:2.0px solid #2a2a2a;border-top:0"></i>
<b style="left:220.8px;top:1076.5px;font-size:16px;">Code postal</b>
<b style="left:399px;top:1076.5px;font-size:16px;">Commune</b>
<b style="left:927px;top:1075.5px;font-size:16px;">Mél (recommandé)</b>
<b style="left:87px;top:1093.7px;font-size:21.3px;">Dans le cas de multi-propriété, veuillez indiquer le nombre de personnes titulaires du certificat d’immatriculation</b>
<i style="left:1150px;top:1084.3px;width:73.8px;height:35.5px;border:1.6px solid #333;background:#dfe3fc"></i>
<i style="left:1187.6px;top:1084.3px;width:1.6px;height:38.7px;background:#333;"></i>
<b style="left:87.5px;top:1128px;font-size:21px;font-weight:700;letter-spacing:1.0px;-webkit-text-stroke:0.9px #231f20;">Co-titulaire</b>
<b style="left:87px;top:1149.4px;font-size:15px;transform:scaleX(0.92);transform-origin:0 0;">le cas échéant</b>
<i style="left:219px;top:1133px;width:609px;height:13px;border:2.0px solid #2a2a2a;border-top:0"></i>
<i style="left:849px;top:1131.5px;width:353px;height:14.5px;border:2.0px solid #2a2a2a;border-top:0"></i>
<i style="left:1223.5px;top:1135px;width:268.5px;height:13px;border:2.0px solid #2a2a2a;border-top:0"></i>
<i style="left:1252.7px;top:1135px;width:2.0px;height:15px;background:#2a2a2a"></i>
<i style="left:1282.8px;top:1135px;width:2.0px;height:15px;background:#2a2a2a"></i>
<i style="left:1313px;top:1135px;width:2.0px;height:15px;background:#2a2a2a"></i>
<i style="left:1344px;top:1135px;width:2.0px;height:15px;background:#2a2a2a"></i>
<i style="left:1374px;top:1135px;width:2.0px;height:15px;background:#2a2a2a"></i>
<i style="left:1404px;top:1135px;width:2.0px;height:15px;background:#2a2a2a"></i>
<i style="left:1434.5px;top:1135px;width:2.0px;height:15px;background:#2a2a2a"></i>
<i style="left:1464.7px;top:1135px;width:2.0px;height:15px;background:#2a2a2a"></i>
<b style="left:223.3px;top:1153.7px;font-size:16px;">NOM DE NAISSANCE et PRÉNOM ou RAISON SOCIALE pour une personne morale</b>
<b style="left:848px;top:1154.5px;font-size:16px;">NOM D’USAGE (facultatif): nom d’époux (se)</b>
<b style="left:1223.5px;top:1150.9px;font-size:16px;">N° SIREN, le cas échéant</b>
<i style="left:75.3px;top:1189.7px;width:1436.7px;height:30px;background:#1d3f94;"></i>
<b style="left:91px;top:1191.3px;font-size:26.4px;font-weight:700;color:#fff;">LOUEUR</b>
<b style="left:210.8px;top:1195.9px;font-size:21.3px;font-weight:700;color:#fff;">(en cas de location ou crédit-bail)</b>
<b style="left:200.8px;top:1232.7px;font-size:21.1px;font-weight:700;">Personne physique</b>
<i style="left:413.4px;top:1235.2px;width:18.4px;height:18.9px;border:1.6px solid #3b4a80;background:#dfe3fc"></i>
<b style="left:482.6px;top:1232.7px;font-size:21.1px;">Sexe :</b>
<b style="left:558px;top:1232.7px;font-size:21.1px;">M</b>
<i style="left:581.7px;top:1235.2px;width:18.9px;height:18.9px;border:1.6px solid #3b4a80;background:#dfe3fc"></i>
<b style="left:639px;top:1232.7px;font-size:21.1px;">F</b>
<i style="left:657.6px;top:1235.2px;width:18.6px;height:18.9px;border:1.6px solid #3b4a80;background:#dfe3fc"></i>
<b style="left:816px;top:1232.7px;font-size:21.1px;font-weight:700;">Personne morale</b>
<i style="left:1005.5px;top:1235.2px;width:17.3px;height:18.9px;border:1.6px solid #3b4a80;background:#dfe3fc"></i>
<i style="left:1085.8px;top:1235.6px;width:269.2px;height:13.4px;border:2.0px solid #2a2a2a;border-top:0"></i>
<i style="left:1115.7px;top:1235.6px;width:2.0px;height:15.4px;background:#2a2a2a"></i>
<i style="left:1146px;top:1235.6px;width:2.0px;height:15.4px;background:#2a2a2a"></i>
<i style="left:1176px;top:1235.6px;width:2.0px;height:15.4px;background:#2a2a2a"></i>
<i style="left:1206.3px;top:1235.6px;width:2.0px;height:15.4px;background:#2a2a2a"></i>
<i style="left:1236.5px;top:1235.6px;width:2.0px;height:15.4px;background:#2a2a2a"></i>
<i style="left:1266.6px;top:1235.6px;width:2.0px;height:15.4px;background:#2a2a2a"></i>
<i style="left:1296.8px;top:1235.6px;width:2.0px;height:15.4px;background:#2a2a2a"></i>
<i style="left:1327px;top:1235.6px;width:2.0px;height:15.4px;background:#2a2a2a"></i>
<b style="left:1143px;top:1259.2px;font-size:16px;">N° SIREN, le cas échéant</b>
<i style="left:221.3px;top:1268px;width:798.7px;height:13.5px;border:2.0px solid #2a2a2a;border-top:0"></i>
<i style="left:1042px;top:1268px;width:450px;height:13.5px;border:2.0px solid #2a2a2a;border-top:0"></i>
<b style="left:219.5px;top:1288.3px;font-size:16px;">NOM DE NAISSANCE et PRÉNOM ou RAISON SOCIALE pour une personne morale</b>
<b style="left:1042px;top:1287.5px;font-size:16px;">NOM D’USAGE (facultatif) : nom d’époux (se)</b>
<i style="left:222.6px;top:1321.8px;width:627.9px;height:12.2px;border:2.0px solid #2a2a2a;border-top:0"></i>
<i style="left:868.5px;top:1321.8px;width:623.5px;height:12.2px;border:2.0px solid #2a2a2a;border-top:0"></i>
<b style="left:223.3px;top:1336.5px;font-size:16px;">Etage / Escalier / Appartement</b>
<b style="left:868.5px;top:1336px;font-size:16px;">Immeuble / Résidence / Bâtiment</b>
<i style="left:225px;top:1366px;width:113px;height:12.5px;border:2.0px solid #2a2a2a;border-top:0"></i>
<i style="left:354.4px;top:1366px;width:129.6px;height:12.5px;border:2.0px solid #2a2a2a;border-top:0"></i>
<i style="left:503.7px;top:1366px;width:201.6px;height:12.5px;border:2.0px solid #2a2a2a;border-top:0"></i>
<i style="left:726.8px;top:1366.8px;width:765.2px;height:12.2px;border:2.0px solid #2a2a2a;border-top:0"></i>
<b style="left:223.3px;top:1380.8px;font-size:16px;">N° de la voie</b>
<b style="left:356.8px;top:1380.8px;font-size:16px;">Extension (bis, ter,...)</b>
<b style="left:517px;top:1380.8px;font-size:16px;">Type de voie (avenue, etc.)</b>
<b style="left:735.6px;top:1380.8px;font-size:16px;">Libellé de voie</b>
<i style="left:223.3px;top:1413px;width:687.7px;height:11.4px;border:2.0px solid #2a2a2a;border-top:0"></i>
<i style="left:927.4px;top:1411.4px;width:563.3px;height:13px;border:2.0px solid #2a2a2a;border-top:0"></i>
<b style="left:223.3px;top:1426.6px;font-size:16px;">Lieu-dit / BP / Localité (si différente de la commune)</b>
<b style="left:927px;top:1426.4px;font-size:16px;">Tél. portable (recommandé)</b>
<i style="left:223.3px;top:1465.5px;width:147.1px;height:11.5px;border:2.0px solid #2a2a2a;border-top:0"></i>
<i style="left:252.5px;top:1465.5px;width:2.0px;height:13.5px;background:#2a2a2a"></i>
<i style="left:283px;top:1465.5px;width:2.0px;height:13.5px;background:#2a2a2a"></i>
<i style="left:313.7px;top:1465.5px;width:2.0px;height:13.5px;background:#2a2a2a"></i>
<i style="left:343.5px;top:1465.5px;width:2.0px;height:13.5px;background:#2a2a2a"></i>
<i style="left:397.2px;top:1465.5px;width:513.8px;height:12px;border:2.0px solid #2a2a2a;border-top:0"></i>
<i style="left:927px;top:1465.6px;width:564px;height:11.9px;border:2.0px solid #2a2a2a;border-top:0"></i>
<b style="left:220.8px;top:1478.5px;font-size:16px;">Code postal</b>
<b style="left:399px;top:1478.5px;font-size:16px;">Commune</b>
<b style="left:927px;top:1477.5px;font-size:16px;">Mél (recommandé)</b>
<i style="left:75.3px;top:1219.6px;width:3px;height:298.4px;background:#1d3f94;"></i>
<i style="left:1509px;top:1219.6px;width:3px;height:298.4px;background:#1d3f94;"></i>
<i style="left:75.3px;top:1518px;width:1436.7px;height:30px;background:#1d3f94;"></i>
<b style="left:91px;top:1519.6px;font-size:26.4px;font-weight:700;color:#fff;">LOCATAIRE</b>
<b style="left:251.5px;top:1524.2px;font-size:21.3px;font-weight:700;color:#fff;">(en cas de location longue durée ou crédit-bail)</b>
<b style="left:200.8px;top:1561px;font-size:21.1px;font-weight:700;">Personne physique</b>
<i style="left:413.4px;top:1563.5px;width:18.4px;height:18.9px;border:1.6px solid #3b4a80;background:#dfe3fc"></i>
<b style="left:482.6px;top:1561px;font-size:21.1px;">Sexe :</b>
<b style="left:558px;top:1561px;font-size:21.1px;">M</b>
<i style="left:581.7px;top:1563.5px;width:18.9px;height:18.9px;border:1.6px solid #3b4a80;background:#dfe3fc"></i>
<b style="left:639px;top:1561px;font-size:21.1px;">F</b>
<i style="left:657.6px;top:1563.5px;width:18.6px;height:18.9px;border:1.6px solid #3b4a80;background:#dfe3fc"></i>
<b style="left:816px;top:1561px;font-size:21.1px;font-weight:700;">Personne morale</b>
<i style="left:1005.5px;top:1563.5px;width:17.3px;height:18.9px;border:1.6px solid #3b4a80;background:#dfe3fc"></i>
<i style="left:1085.8px;top:1563.9px;width:269.2px;height:13.4px;border:2.0px solid #2a2a2a;border-top:0"></i>
<i style="left:1115.7px;top:1563.9px;width:2.0px;height:15.4px;background:#2a2a2a"></i>
<i style="left:1146px;top:1563.9px;width:2.0px;height:15.4px;background:#2a2a2a"></i>
<i style="left:1176px;top:1563.9px;width:2.0px;height:15.4px;background:#2a2a2a"></i>
<i style="left:1206.3px;top:1563.9px;width:2.0px;height:15.4px;background:#2a2a2a"></i>
<i style="left:1236.5px;top:1563.9px;width:2.0px;height:15.4px;background:#2a2a2a"></i>
<i style="left:1266.6px;top:1563.9px;width:2.0px;height:15.4px;background:#2a2a2a"></i>
<i style="left:1296.8px;top:1563.9px;width:2.0px;height:15.4px;background:#2a2a2a"></i>
<i style="left:1327px;top:1563.9px;width:2.0px;height:15.4px;background:#2a2a2a"></i>
<b style="left:1143px;top:1587.5px;font-size:16px;">N° SIREN, le cas échéant</b>
<i style="left:221.3px;top:1596.3px;width:798.7px;height:13.5px;border:2.0px solid #2a2a2a;border-top:0"></i>
<i style="left:1042px;top:1596.3px;width:450px;height:13.5px;border:2.0px solid #2a2a2a;border-top:0"></i>
<b style="left:219.5px;top:1616.6px;font-size:16px;">NOM DE NAISSANCE et PRÉNOM ou RAISON SOCIALE pour une personne morale</b>
<b style="left:1042px;top:1615.8px;font-size:16px;">NOM D’USAGE (facultatif) : nom d’époux (se)</b>
<i style="left:222.6px;top:1650.1px;width:627.9px;height:12.2px;border:2.0px solid #2a2a2a;border-top:0"></i>
<i style="left:868.5px;top:1650.1px;width:623.5px;height:12.2px;border:2.0px solid #2a2a2a;border-top:0"></i>
<b style="left:223.3px;top:1664.8px;font-size:16px;">Etage / Escalier / Appartement</b>
<b style="left:868.5px;top:1664.3px;font-size:16px;">Immeuble / Résidence / Bâtiment</b>
<i style="left:225px;top:1695.3px;width:113px;height:12.5px;border:2.0px solid #2a2a2a;border-top:0"></i>
<i style="left:354.4px;top:1695.3px;width:129.6px;height:12.5px;border:2.0px solid #2a2a2a;border-top:0"></i>
<i style="left:503.7px;top:1695.3px;width:201.6px;height:12.5px;border:2.0px solid #2a2a2a;border-top:0"></i>
<i style="left:726.8px;top:1696.1px;width:765.2px;height:12.2px;border:2.0px solid #2a2a2a;border-top:0"></i>
<b style="left:223.3px;top:1710.1px;font-size:16px;">N° de la voie</b>
<b style="left:356.8px;top:1710.1px;font-size:16px;">Extension (bis, ter,...)</b>
<b style="left:517px;top:1710.1px;font-size:16px;">Type de voie (avenue, etc.)</b>
<b style="left:735.6px;top:1710.1px;font-size:16px;">Libellé de voie</b>
<i style="left:223.3px;top:1743.3px;width:687.7px;height:11.4px;border:2.0px solid #2a2a2a;border-top:0"></i>
<i style="left:927.4px;top:1741.7px;width:563.3px;height:13px;border:2.0px solid #2a2a2a;border-top:0"></i>
<b style="left:223.3px;top:1756.9px;font-size:16px;">Lieu-dit / BP / Localité (si différente de la commune)</b>
<b style="left:927px;top:1756.7px;font-size:16px;">Tél. portable (recommandé)</b>
<i style="left:223.3px;top:1793.8px;width:147.1px;height:11.5px;border:2.0px solid #2a2a2a;border-top:0"></i>
<i style="left:252.5px;top:1793.8px;width:2.0px;height:13.5px;background:#2a2a2a"></i>
<i style="left:283px;top:1793.8px;width:2.0px;height:13.5px;background:#2a2a2a"></i>
<i style="left:313.7px;top:1793.8px;width:2.0px;height:13.5px;background:#2a2a2a"></i>
<i style="left:343.5px;top:1793.8px;width:2.0px;height:13.5px;background:#2a2a2a"></i>
<i style="left:397.2px;top:1793.8px;width:513.8px;height:12px;border:2.0px solid #2a2a2a;border-top:0"></i>
<i style="left:927px;top:1793.9px;width:564px;height:11.9px;border:2.0px solid #2a2a2a;border-top:0"></i>
<b style="left:220.8px;top:1806.8px;font-size:16px;">Code postal</b>
<b style="left:399px;top:1806.8px;font-size:16px;">Commune</b>
<b style="left:927px;top:1805.8px;font-size:16px;">Mél (recommandé)</b>
<i style="left:75.3px;top:1548px;width:3px;height:294px;background:#1d3f94;"></i>
<i style="left:1509px;top:1548px;width:3px;height:294px;background:#1d3f94;"></i>
<i style="left:75.3px;top:1841px;width:1073.7px;height:267px;border:3.0px solid #1d3f94;"></i>
<i style="left:433.5px;top:1841px;width:3px;height:203px;background:#1d3f94;"></i>
<i style="left:793px;top:1841px;width:3px;height:203px;background:#1d3f94;"></i>
<i style="left:75.3px;top:2041px;width:1079.7px;height:3px;background:#1d3f94;"></i>
<i style="left:1152px;top:1841px;width:354px;height:267px;border:3.0px solid #1d3f94;"></i>
<i style="left:1152px;top:1841px;width:360px;height:46px;background:#1d3f94;"></i>
<b style="left:1163px;top:1846.5px;font-size:16px;font-weight:700;color:#fff;">CADRE RÉSERVÉ À</b>
<b style="left:1163px;top:1866.5px;font-size:16px;font-weight:700;color:#fff;">L’ADMINISTRATION</b>
<b style="left:256px;top:1860px;font-size:21px;font-weight:700;transform:translateX(-50%);">Le titulaire</b>
<b style="left:614px;top:1860px;font-size:21px;font-weight:700;transform:translateX(-50%);">Le loueur</b>
<b style="left:974px;top:1860px;font-size:21px;font-weight:700;transform:translateX(-50%);">Le locataire</b>
<b style="left:614px;top:1888.4px;font-size:15px;transform:translateX(-50%);">(Société de location en cas de crédit-bail)</b>
<b style="left:974px;top:1888.4px;font-size:15px;transform:translateX(-50%);">(En location longue durée ou en crédit-bail)</b>
<b style="left:86px;top:1914.5px;font-size:16px;">Fait à : ……………………… Le : ……………………</b>
<b style="left:86px;top:1936.5px;font-size:16px;">Signature :</b>
<b style="left:446px;top:1914.5px;font-size:16px;">Fait à : ……………………… Le : ……………………</b>
<b style="left:446px;top:1936.5px;font-size:16px;">Signature :</b>
<b style="left:806px;top:1914.5px;font-size:16px;">Fait à : ……………………… Le : ……………………</b>
<b style="left:806px;top:1936.5px;font-size:16px;">Signature :</b>
<b style="left:446px;top:1960.3px;font-size:14px;">(Pour les sociétés: nom, qualité du signataire et cachet)</b>
<b style="left:806px;top:1960.3px;font-size:14px;">(Pour les sociétés: nom, qualité du signataire et cachet)</b>
<b style="left:614px;top:2057.4px;font-size:15px;transform:translateX(-50%);">Je m’oppose à la réutilisation de mes données personnelles à des fins de prospection commerciale**.</b>
<b style="left:398px;top:2078.4px;font-size:15px;">Le titulaire</b>
<b style="left:668px;top:2078.4px;font-size:15px;">Le loueur</b>
<b style="left:928px;top:2078.4px;font-size:15px;">Le locataire</b>
<b style="left:1163px;top:1907.2px;font-size:13px;">Autorisations particulières</b>
<b style="left:1163px;top:1930.2px;font-size:13px;">Rejet de la demande</b>
<b style="left:1163px;top:1953.2px;font-size:13px;">Motif :</b>
<b style="left:1163px;top:2000.2px;font-size:13px;">(Veuillez cocher la case correspondante)</b>
<b style="left:1163px;top:2022.2px;font-size:13px;">Oui        Non</b>
<b style="left:1163px;top:2044.2px;font-size:13px;">Mode d’expédition du titre :      Voie postale</b>
<b style="left:1163px;top:2067.2px;font-size:13px;">Remise à l’Imprimerie Nationale</b>
<b style="left:78px;top:2119.1px;font-size:12px;">*La loi n° 78-17 du 6 janvier 1978 relative à l’informatique, aux fichiers et aux libertés garantit un droit d’accès et de rectification des données auprès des services de l’État.</b>
<b style="left:78px;top:2133.1px;font-size:12px;">**Uniquement pour les personnes physiques</b>
</div></div>
<div class="thumb" style="position:absolute;left:158px;top:199px;width:326px;height:442px;overflow:hidden;z-index:0">
<div class="pg" style="transform:scale(0.2055);transform-origin:0 0">
<i style="left:96px;top:322px;width:289.7px;height:47px;background:#dfe3fc;"></i>
<i style="left:444.7px;top:335px;width:308.3px;height:34px;background:#dfe3fc;"></i>
<i style="left:813px;top:337px;width:308.6px;height:32px;background:#dfe3fc;"></i>
<i style="left:1181px;top:337px;width:310.3px;height:32px;background:#dfe3fc;"></i>
<i style="left:96px;top:409.7px;width:403.7px;height:41px;background:#dfe3fc;"></i>
<i style="left:98px;top:475.7px;width:452px;height:33.3px;background:#dfe3fc;"></i>
<i style="left:599px;top:476.6px;width:243px;height:29.4px;background:#dfe3fc;"></i>
<i style="left:98px;top:536px;width:744px;height:28px;background:#dfe3fc;"></i>
<i style="left:97px;top:591px;width:454px;height:27px;background:#dfe3fc;"></i>
<i style="left:596px;top:591px;width:246px;height:27px;background:#dfe3fc;"></i>
<i style="left:97px;top:649px;width:456px;height:27px;background:#dfe3fc;"></i>
<i style="left:821.7px;top:711px;width:28px;height:27px;background:#dfe3fc;"></i>
<i style="left:1084px;top:711px;width:28px;height:27px;background:#dfe3fc;"></i>
<i style="left:1343px;top:711px;width:28px;height:27px;background:#dfe3fc;"></i>
<i style="left:410.9px;top:784.2px;width:26.6px;height:27.1px;background:#dfe3fc;"></i>
<i style="left:579.2px;top:784.2px;width:27.1px;height:27.1px;background:#dfe3fc;"></i>
<i style="left:655.1px;top:784.2px;width:26.8px;height:27.1px;background:#dfe3fc;"></i>
<i style="left:1003px;top:784.2px;width:25.5px;height:27.1px;background:#dfe3fc;"></i>
<i style="left:1086px;top:771.7px;width:273px;height:30.3px;background:#dfe3fc;"></i>
<i style="left:204px;top:824.7px;width:814.7px;height:25.3px;background:#dfe3fc;"></i>
<i style="left:1048.8px;top:824.5px;width:442.2px;height:28.3px;background:#dfe3fc;"></i>
<i style="left:155.8px;top:873.8px;width:250.6px;height:26.2px;background:#dfe3fc;"></i>
<i style="left:463px;top:874px;width:518.7px;height:26px;background:#dfe3fc;"></i>
<i style="left:1009px;top:874px;width:89.6px;height:26px;background:#dfe3fc;"></i>
<i style="left:1127px;top:874px;width:379px;height:26px;background:#dfe3fc;"></i>
<i style="left:231.4px;top:925px;width:613.1px;height:27px;background:#dfe3fc;"></i>
<i style="left:877px;top:925px;width:613px;height:27px;background:#dfe3fc;"></i>
<i style="left:228px;top:965px;width:107.7px;height:27px;background:#dfe3fc;"></i>
<i style="left:358px;top:965px;width:144.6px;height:27px;background:#dfe3fc;"></i>
<i style="left:508px;top:965px;width:217px;height:27px;background:#dfe3fc;"></i>
<i style="left:732px;top:964px;width:756px;height:27.5px;background:#dfe3fc;"></i>
<i style="left:228px;top:1006.6px;width:680.5px;height:26.4px;background:#dfe3fc;"></i>
<i style="left:935px;top:1006.6px;width:551.4px;height:26.4px;background:#dfe3fc;"></i>
<i style="left:220px;top:1045px;width:151px;height:30px;background:#dfe3fc;"></i>
<i style="left:401.8px;top:1045px;width:506.7px;height:29px;background:#dfe3fc;"></i>
<i style="left:935px;top:1045px;width:551.4px;height:29px;background:#dfe3fc;"></i>
<i style="left:222.6px;top:1120px;width:600.8px;height:26px;background:#dfe3fc;"></i>
<i style="left:854.6px;top:1120px;width:345.1px;height:26.6px;background:#dfe3fc;"></i>
<i style="left:1228px;top:1119.4px;width:263px;height:26.6px;background:#dfe3fc;"></i>
<i style="left:410.9px;top:1232.7px;width:26.6px;height:27.1px;background:#dfe3fc;"></i>
<i style="left:579.2px;top:1232.7px;width:27.1px;height:27.1px;background:#dfe3fc;"></i>
<i style="left:655.1px;top:1232.7px;width:26.8px;height:27.1px;background:#dfe3fc;"></i>
<i style="left:1003px;top:1232.7px;width:25.5px;height:27.1px;background:#dfe3fc;"></i>
<i style="left:1086px;top:1219.7px;width:273px;height:30.3px;background:#dfe3fc;"></i>
<i style="left:227.8px;top:1259px;width:790.2px;height:28px;background:#dfe3fc;"></i>
<i style="left:1048px;top:1259px;width:443px;height:28px;background:#dfe3fc;"></i>
<i style="left:231.4px;top:1307px;width:613.1px;height:27px;background:#dfe3fc;"></i>
<i style="left:877px;top:1307px;width:613px;height:27px;background:#dfe3fc;"></i>
<i style="left:228px;top:1352.5px;width:107.7px;height:27px;background:#dfe3fc;"></i>
<i style="left:358px;top:1352.5px;width:144.6px;height:27px;background:#dfe3fc;"></i>
<i style="left:508px;top:1352.5px;width:217px;height:27px;background:#dfe3fc;"></i>
<i style="left:732px;top:1351.5px;width:756px;height:27.5px;background:#dfe3fc;"></i>
<i style="left:228px;top:1399px;width:680.5px;height:26.4px;background:#dfe3fc;"></i>
<i style="left:935px;top:1399px;width:551.4px;height:26.4px;background:#dfe3fc;"></i>
<i style="left:220px;top:1447px;width:151px;height:30px;background:#dfe3fc;"></i>
<i style="left:401.8px;top:1447px;width:506.7px;height:29px;background:#dfe3fc;"></i>
<i style="left:935px;top:1447px;width:551.4px;height:29px;background:#dfe3fc;"></i>
<i style="left:410.9px;top:1561px;width:26.6px;height:27.1px;background:#dfe3fc;"></i>
<i style="left:579.2px;top:1561px;width:27.1px;height:27.1px;background:#dfe3fc;"></i>
<i style="left:655.1px;top:1561px;width:26.8px;height:27.1px;background:#dfe3fc;"></i>
<i style="left:1003px;top:1561px;width:25.5px;height:27.1px;background:#dfe3fc;"></i>
<i style="left:1086px;top:1548px;width:273px;height:30.3px;background:#dfe3fc;"></i>
<i style="left:227.8px;top:1587.3px;width:790.2px;height:28px;background:#dfe3fc;"></i>
<i style="left:1048px;top:1587.3px;width:443px;height:28px;background:#dfe3fc;"></i>
<i style="left:231.4px;top:1635.3px;width:613.1px;height:27px;background:#dfe3fc;"></i>
<i style="left:877px;top:1635.3px;width:613px;height:27px;background:#dfe3fc;"></i>
<i style="left:228px;top:1681.8px;width:107.7px;height:27px;background:#dfe3fc;"></i>
<i style="left:358px;top:1681.8px;width:144.6px;height:27px;background:#dfe3fc;"></i>
<i style="left:508px;top:1681.8px;width:217px;height:27px;background:#dfe3fc;"></i>
<i style="left:732px;top:1680.8px;width:756px;height:27.5px;background:#dfe3fc;"></i>
<i style="left:228px;top:1729.3px;width:680.5px;height:26.4px;background:#dfe3fc;"></i>
<i style="left:935px;top:1729.3px;width:551.4px;height:26.4px;background:#dfe3fc;"></i>
<i style="left:220px;top:1775.3px;width:151px;height:30px;background:#dfe3fc;"></i>
<i style="left:401.8px;top:1775.3px;width:506.7px;height:29px;background:#dfe3fc;"></i>
<i style="left:935px;top:1775.3px;width:551.4px;height:29px;background:#dfe3fc;"></i>
<i style="left:75px;top:75px;width:115.1px;height:149.6px;border:3.2px solid #58595b;background:#fff"></i>
<i style="left:77px;top:156px;width:117.5px;height:73px;background:#98989c;"></i>
<i style="left:75px;top:154.5px;width:121.5px;height:2px;background:#58595b;"></i>
<svg class="flag" style="left:93px;top:91px" width="87" height="30" viewBox="0 0 87 30"><path d="M0 0 H38 Q31 6 32 13 Q33 19 39 21.5 L31 26 L22 29 H0 Z" fill="#2556a8"/><path d="M13 25.5 Q22 17.5 32 19 M17 28 Q26 21.5 36 22.5 M23 28.5 Q30 25 37 25.5" stroke="#fff" stroke-width="1.2" fill="none"/><path d="M51.5 0 H86 V29 H45 Q50 26.5 52 24 L50.5 21.5 Q52 20 50.5 18.5 Q52 17 50 15.5 L51 13.5 L47.5 11.5 Q50.5 8 50.5 5 Q51 2 51.5 0 Z" fill="#e1151c"/></svg>
<b style="left:136px;top:121.6px;font-size:7.4px;color:#222;font-style:italic;font-family:'Liberation Serif';transform:translateX(-50%);">Liberté • Égalité • Fraternité</b>
<i style="left:93px;top:131px;width:86px;height:1.2px;background:#333;"></i>
<b style="left:136px;top:133.1px;font-size:8.7px;color:#222;font-family:'Liberation Serif';transform:translateX(-50%);letter-spacing:0.2px">R<span style="font-size:6.9px">ÉPUBLIQUE</span> F<span style="font-size:6.9px">RANÇAISE</span></b>
<b style="left:135.7px;top:169.1px;font-size:13.2px;color:#fff;font-family:'Liberation Serif';transform:translateX(-50%);letter-spacing:1.7px">MINISTÈRE</b>
<b style="left:135.7px;top:187.6px;font-size:13.2px;color:#fff;font-family:'Liberation Serif';transform:translateX(-50%);letter-spacing:1.9px">DE</b>
<b style="left:135.7px;top:206.1px;font-size:13.2px;color:#fff;font-family:'Liberation Serif';transform:translateX(-50%);letter-spacing:1.3px">L’INTÉRIEUR</b>
<b style="left:252px;top:74.2px;font-size:34.4px;font-weight:700;color:#1d3f94;">DEMANDE DE CERTIFICAT D’IMMATRICULATION D’UN VÉHICULE</b>
<b style="left:540px;top:121.7px;font-size:23.9px;">Articles R. 322-1 et suivants du code de la route</b>
<b style="left:557.5px;top:158.5px;font-size:21.5px;font-weight:700;letter-spacing:1.4px;-webkit-text-stroke:0.8px #231f20;">Veuillez cocher la case correspondante :</b>
<i style="left:394.6px;top:198px;width:20.9px;height:20.4px;border:2.8px solid #2c4a9e;background:#dfe3fc"></i>
<i style="left:557.4px;top:198px;width:20.9px;height:20.4px;border:2.8px solid #2c4a9e;background:#dfe3fc"></i>
<i style="left:722.8px;top:198px;width:20.9px;height:20.4px;border:2.8px solid #2c4a9e;background:#dfe3fc"></i>
<i style="left:900px;top:198px;width:20.9px;height:20.4px;border:2.8px solid #2c4a9e;background:#dfe3fc"></i>
<b style="left:435.5px;top:200.1px;font-size:21.2px;font-weight:700;color:#1d3f94;">Certificat</b>
<b style="left:598px;top:200.1px;font-size:21.2px;font-weight:700;color:#1d3f94;">Duplicata</b>
<b style="left:763px;top:200.1px;font-size:21.2px;font-weight:700;color:#1d3f94;">Correction</b>
<b style="left:940px;top:200.1px;font-size:21.2px;font-weight:700;color:#1d3f94;">Changement de domicile</b>
<i style="left:216px;top:239px;width:20.9px;height:20.4px;border:2.8px solid #2c4a9e;background:#dfe3fc"></i>
<i style="left:747px;top:239px;width:20.9px;height:20.4px;border:2.8px solid #2c4a9e;background:#dfe3fc"></i>
<b style="left:256px;top:240.6px;font-size:21.2px;font-weight:700;color:#1d3f94;">Changement d’état civil ou d’état matrimonial</b>
<b style="left:787px;top:240.6px;font-size:21.2px;font-weight:700;color:#1d3f94;">Changement des caractéristiques techniques du véhicule</b>
<i style="left:1393px;top:19.5px;width:159.4px;height:29.4px;border:4.800000000000001px solid #111;background:#b4b8d3;box-shadow:inset 2px 2px 0 #e4e6f2, inset -2px -2px 0 #6d7090"></i>
<b style="left:1477.5px;top:23px;font-size:26.5px;color:#111;transform:translateX(-50%);">Lire la notice</b>
<i style="left:1393px;top:177.5px;width:141.4px;height:26.9px;border:4.800000000000001px solid #111;background:#b4b8d3;box-shadow:inset 2px 2px 0 #e4e6f2, inset -2px -2px 0 #6d7090"></i>
<b style="left:1468.5px;top:178.5px;font-size:26px;color:#111;transform:translateX(-50%);">Imprimer</b>
<i style="left:1393px;top:232.5px;width:141.4px;height:27.4px;border:4.800000000000001px solid #111;background:#b4b8d3;box-shadow:inset 2px 2px 0 #e4e6f2, inset -2px -2px 0 #6d7090"></i>
<b style="left:1468.5px;top:236.3px;font-size:24.5px;color:#111;transform:translateX(-50%);">Réinitialiser</b>
<svg style="left:1393px;top:75px" width="105" height="43" viewBox="0 0 105 43"><ellipse cx="52" cy="21" rx="52" ry="21" fill="#111"/></svg>
<b style="left:1445px;top:76.3px;font-size:35px;font-weight:700;color:#fff;font-family:'Liberation Serif';font-style:italic;transform:translateX(-50%);letter-spacing:0.5px">cerfa</b>
<b style="left:1378px;top:119.7px;font-size:23.8px;font-weight:700;color:#222;">N° 13750*05</b>
<i style="left:75.3px;top:285px;width:1436.7px;height:30.5px;background:#1d3f94;"></i>
<i style="left:75.3px;top:285px;width:3px;height:457px;background:#1d3f94;"></i>
<i style="left:1509px;top:285px;width:3px;height:457px;background:#1d3f94;"></i>
<b style="left:91.5px;top:287.1px;font-size:26.4px;font-weight:700;color:#fff;">VÉHICULE</b>
<i style="left:91px;top:324.7px;width:292.4px;height:42px;border:4.8px solid #2a2a2a;border-top:0"></i>
<i style="left:440px;top:340px;width:69.1px;height:26.7px;border:4.8px solid #2a2a2a;border-top:0"></i>
<i style="left:475.6px;top:340px;width:4.8px;height:31.5px;background:#2a2a2a"></i>
<i style="left:521.3px;top:340px;width:71.2px;height:26.7px;border:4.8px solid #2a2a2a;border-top:0"></i>
<i style="left:558.9px;top:340px;width:4.8px;height:31.5px;background:#2a2a2a"></i>
<i style="left:604.6px;top:340px;width:144.5px;height:26.7px;border:4.8px solid #2a2a2a;border-top:0"></i>
<i style="left:642.3px;top:340px;width:4.8px;height:31.5px;background:#2a2a2a"></i>
<i style="left:680.6px;top:340px;width:4.8px;height:31.5px;background:#2a2a2a"></i>
<i style="left:718.3px;top:340px;width:4.8px;height:31.5px;background:#2a2a2a"></i>
<i style="left:808.2px;top:340px;width:68.6px;height:26.7px;border:4.8px solid #2a2a2a;border-top:0"></i>
<i style="left:843.9px;top:340px;width:4.8px;height:31.5px;background:#2a2a2a"></i>
<i style="left:889.1px;top:340px;width:71.4px;height:26.7px;border:4.8px solid #2a2a2a;border-top:0"></i>
<i style="left:927.6px;top:340px;width:4.8px;height:31.5px;background:#2a2a2a"></i>
<i style="left:972.9px;top:340px;width:144.8px;height:26.7px;border:4.8px solid #2a2a2a;border-top:0"></i>
<i style="left:1011.4px;top:340px;width:4.8px;height:31.5px;background:#2a2a2a"></i>
<i style="left:1049.1px;top:340px;width:4.8px;height:31.5px;background:#2a2a2a"></i>
<i style="left:1086.8px;top:340px;width:4.8px;height:31.5px;background:#2a2a2a"></i>
<i style="left:1176.4px;top:340px;width:68.9px;height:26.7px;border:4.8px solid #2a2a2a;border-top:0"></i>
<i style="left:1212.4px;top:340px;width:4.8px;height:31.5px;background:#2a2a2a"></i>
<i style="left:1257.6px;top:340px;width:71.5px;height:26.7px;border:4.8px solid #2a2a2a;border-top:0"></i>
<i style="left:1295.4px;top:340px;width:4.8px;height:31.5px;background:#2a2a2a"></i>
<i style="left:1341.4px;top:340px;width:144px;height:26.7px;border:4.8px solid #2a2a2a;border-top:0"></i>
<i style="left:1379.2px;top:340px;width:4.8px;height:31.5px;background:#2a2a2a"></i>
<i style="left:1416.9px;top:340px;width:4.8px;height:31.5px;background:#2a2a2a"></i>
<i style="left:1455px;top:340px;width:4.8px;height:31.5px;background:#2a2a2a"></i>
<b style="left:92.7px;top:383.8px;font-size:18.6px;">(A) Numéro d’immatriculation actuel</b>
<b style="left:482.3px;top:383.8px;font-size:18.6px;">Date d’achat, le cas échéant</b>
<b style="left:859px;top:383.7px;font-size:18.6px;">(I) Date de certificat actuel</b>
<b style="left:1210.3px;top:383.7px;font-size:18.6px;">(B) Date de 1<sup>re</sup> immatriculation</b>
<i style="left:91px;top:421.7px;width:406.4px;height:25.5px;border:4.8px solid #2a2a2a;border-top:0"></i>
<b style="left:91px;top:453.9px;font-size:18.6px;">Numéro de formule du certificat d’immatriculation *</b>
<b style="left:523px;top:428.8px;font-size:18.6px;">(si nouveau format d’immatriculation. Ce numéro figure sur la 1<sup>re</sup> page</b>
<b style="left:525px;top:453.5px;font-size:18.6px;">du certificat d’immatriculation sous la mention « Certificat d’immatriculation »)</b>
<i style="left:91px;top:477.3px;width:457.4px;height:26.4px;border:4.8px solid #2a2a2a;border-top:0"></i>
<i style="left:593.7px;top:477.7px;width:246.4px;height:25.5px;border:4.8px solid #2a2a2a;border-top:0"></i>
<b style="left:273px;top:515.5px;font-size:18.6px;">Marque (D.1)</b>
<b style="left:586px;top:515px;font-size:18.6px;">Dénomination commerciale (D.3)</b>
<b style="left:937.6px;top:485.4px;font-size:20.6px;font-weight:700;">COULEUR DOMINANTE</b>
<b style="left:1183.5px;top:489.5px;font-size:16px;">(Veuillez cocher les cases correspondantes)</b>
<i style="left:91.4px;top:538px;width:749px;height:22.7px;border:4.8px solid #2a2a2a;border-top:0"></i>
<b style="left:378.6px;top:571.2px;font-size:18.6px;">Type variante version (D.2)</b>
<i style="left:89.6px;top:592px;width:457.8px;height:25.2px;border:4.8px solid #2a2a2a;border-top:0"></i>
<i style="left:592px;top:592px;width:246.4px;height:25.2px;border:4.8px solid #2a2a2a;border-top:0"></i>
<b style="left:152px;top:627.2px;font-size:18.6px;">Numéro d’identification du véhicule (E)</b>
<b style="left:633px;top:627.2px;font-size:18.6px;">Genre national (J.1)</b>
<i style="left:91px;top:649px;width:458.4px;height:25.2px;border:4.8px solid #2a2a2a;border-top:0"></i>
<b style="left:122px;top:683px;font-size:18.6px;">Numéro d’exploitation agricole, le cas échéant</b>
<b style="left:91.4px;top:712.3px;font-size:21.2px;font-weight:700;">Si véhicule pris en location, cocher la case correspondante:</b>
<b style="left:729px;top:714.7px;font-size:18.6px;">Véhicule</b>
<b style="left:857px;top:714.7px;font-size:18.6px;">en location longue durée</b>
<b style="left:1119.5px;top:714.7px;font-size:18.6px;">en location courte durée</b>
<b style="left:1378.5px;top:714.7px;font-size:18.6px;">en crédit-bail</b>
<i style="left:824.7px;top:714px;width:17.5px;height:16.5px;border:2.2399999999999998px solid #3b4a80;background:#dfe3fc"></i>
<i style="left:1087px;top:714px;width:17.5px;height:16.5px;border:2.2399999999999998px solid #3b4a80;background:#dfe3fc"></i>
<i style="left:1346px;top:714px;width:17.5px;height:16.5px;border:2.2399999999999998px solid #3b4a80;background:#dfe3fc"></i>
<i style="left:981.5px;top:535.5px;width:460.9px;height:144.9px;border:4.800000000000001px solid #161616;"></i>
<i style="left:1099.5px;top:535.5px;width:3px;height:154.5px;background:#161616;"></i>
<i style="left:997px;top:573.5px;width:12.9px;height:12.9px;border:1.8199999999999998px solid #3c3c50;background:#dfe3fc"></i>
<i style="left:997px;top:638.5px;width:12.9px;height:12.9px;border:1.8199999999999998px solid #3c3c50;background:#dfe3fc"></i>
<b style="left:1037.5px;top:572.1px;font-size:16.2px;">Clair</b>
<b style="left:1037.5px;top:637px;font-size:16.2px;">Foncé</b>
<i style="left:1122px;top:547px;width:15.4px;height:15.4px;border:1.8199999999999998px solid #3c3c50;background:#dfe3fc"></i>
<b style="left:1162px;top:547.1px;font-size:16.2px;">Noir</b>
<i style="left:1122px;top:583.4px;width:15.4px;height:15.4px;border:1.8199999999999998px solid #3c3c50;background:#dfe3fc"></i>
<b style="left:1162px;top:583px;font-size:16.2px;">Marron</b>
<i style="left:1122px;top:619px;width:15.4px;height:15.4px;border:1.8199999999999998px solid #3c3c50;background:#dfe3fc"></i>
<b style="left:1162px;top:618.9px;font-size:16.2px;">Rouge</b>
<i style="left:1122px;top:655.8px;width:15.4px;height:15.4px;border:1.8199999999999998px solid #3c3c50;background:#dfe3fc"></i>
<b style="left:1162px;top:654.9px;font-size:16.2px;">Orange</b>
<i style="left:1244px;top:547px;width:15.4px;height:15.4px;border:1.8199999999999998px solid #3c3c50;background:#dfe3fc"></i>
<b style="left:1284.6px;top:547.1px;font-size:16.2px;">Jaune</b>
<i style="left:1244px;top:583.4px;width:15.4px;height:15.4px;border:1.8199999999999998px solid #3c3c50;background:#dfe3fc"></i>
<b style="left:1284.6px;top:583px;font-size:16.2px;">Vert</b>
<i style="left:1244px;top:619px;width:15.4px;height:15.4px;border:1.8199999999999998px solid #3c3c50;background:#dfe3fc"></i>
<b style="left:1284.6px;top:618.9px;font-size:16.2px;">Bleu</b>
<i style="left:1244px;top:655.8px;width:15.4px;height:15.4px;border:1.8199999999999998px solid #3c3c50;background:#dfe3fc"></i>
<b style="left:1284.6px;top:654.9px;font-size:16.2px;">Beige</b>
<i style="left:1359.7px;top:547px;width:15.4px;height:15.4px;border:1.8199999999999998px solid #3c3c50;background:#dfe3fc"></i>
<b style="left:1399px;top:547.1px;font-size:16.2px;">Gris</b>
<i style="left:1359.7px;top:583.4px;width:15.4px;height:15.4px;border:1.8199999999999998px solid #3c3c50;background:#dfe3fc"></i>
<b style="left:1399px;top:583px;font-size:16.2px;">Blanc</b>
<i style="left:75.3px;top:741.7px;width:1436.7px;height:29.9px;background:#1d3f94;"></i>
<i style="left:75.3px;top:771.6px;width:3px;height:418.4px;background:#1d3f94;"></i>
<i style="left:1509px;top:771.6px;width:3px;height:418.4px;background:#1d3f94;"></i>
<b style="left:90.8px;top:743.5px;font-size:26.4px;font-weight:700;color:#fff;">TITULAIRE</b>
<b style="left:200.8px;top:785.2px;font-size:21.1px;font-weight:700;">Personne physique</b>
<i style="left:413.4px;top:786.7px;width:17.1px;height:17.6px;border:2.2399999999999998px solid #3b4a80;background:#dfe3fc"></i>
<b style="left:482.6px;top:785.2px;font-size:21.1px;">Sexe :</b>
<b style="left:558px;top:785.2px;font-size:21.1px;">M</b>
<i style="left:581.7px;top:786.7px;width:17.6px;height:17.6px;border:2.2399999999999998px solid #3b4a80;background:#dfe3fc"></i>
<b style="left:639px;top:785.2px;font-size:21.1px;">F</b>
<i style="left:657.6px;top:786.7px;width:17.3px;height:17.6px;border:2.2399999999999998px solid #3b4a80;background:#dfe3fc"></i>
<b style="left:816px;top:785.2px;font-size:21.1px;font-weight:700;">Personne morale</b>
<i style="left:1005.5px;top:786.7px;width:16px;height:17.6px;border:2.2399999999999998px solid #3b4a80;background:#dfe3fc"></i>
<i style="left:1085.8px;top:787.6px;width:263.6px;height:10.6px;border:4.8px solid #2a2a2a;border-top:0"></i>
<i style="left:1114.3px;top:787.6px;width:4.8px;height:15.4px;background:#2a2a2a"></i>
<i style="left:1144.6px;top:787.6px;width:4.8px;height:15.4px;background:#2a2a2a"></i>
<i style="left:1174.6px;top:787.6px;width:4.8px;height:15.4px;background:#2a2a2a"></i>
<i style="left:1204.9px;top:787.6px;width:4.8px;height:15.4px;background:#2a2a2a"></i>
<i style="left:1235.1px;top:787.6px;width:4.8px;height:15.4px;background:#2a2a2a"></i>
<i style="left:1265.2px;top:787.6px;width:4.8px;height:15.4px;background:#2a2a2a"></i>
<i style="left:1295.4px;top:787.6px;width:4.8px;height:15.4px;background:#2a2a2a"></i>
<i style="left:1325.6px;top:787.6px;width:4.8px;height:15.4px;background:#2a2a2a"></i>
<b style="left:1143px;top:811.2px;font-size:16px;">N° SIREN, le cas échéant</b>
<b style="left:87.8px;top:832px;font-size:21px;font-weight:700;letter-spacing:1.7px;-webkit-text-stroke:0.9px #231f20;">Titulaire</b>
<i style="left:200.5px;top:836px;width:814.2px;height:10.7px;border:4.8px solid #2a2a2a;border-top:0"></i>
<i style="left:1042.4px;top:835px;width:443.9px;height:11.7px;border:4.8px solid #2a2a2a;border-top:0"></i>
<b style="left:201.5px;top:856.5px;font-size:16px;">NOM DE NAISSANCE et PRÉNOM ou RAISON SOCIALE pour une personne morale</b>
<b style="left:1042px;top:855.3px;font-size:16px;">NOM D’USAGE (facultatif) : nom d’époux (se)</b>
<b style="left:87px;top:881.7px;font-size:21.3px;">Né(e)</b>
<i style="left:152.3px;top:885.8px;width:53.6px;height:10.9px;border:4.8px solid #2a2a2a;border-top:0"></i>
<i style="left:180.8px;top:885.8px;width:4.8px;height:15.7px;background:#2a2a2a"></i>
<i style="left:218.4px;top:885.8px;width:56px;height:10.9px;border:4.8px solid #2a2a2a;border-top:0"></i>
<i style="left:249px;top:885.8px;width:4.8px;height:15.7px;background:#2a2a2a"></i>
<i style="left:287px;top:885.8px;width:114px;height:10.9px;border:4.8px solid #2a2a2a;border-top:0"></i>
<i style="left:317.9px;top:885.8px;width:4.8px;height:15.7px;background:#2a2a2a"></i>
<i style="left:347.8px;top:885.8px;width:4.8px;height:15.7px;background:#2a2a2a"></i>
<i style="left:377.6px;top:885.8px;width:4.8px;height:15.7px;background:#2a2a2a"></i>
<b style="left:167.4px;top:904px;font-size:16px;">Jour</b>
<b style="left:235px;top:904px;font-size:16px;">Mois</b>
<b style="left:328px;top:904px;font-size:16px;">Année</b>
<b style="left:435px;top:881.7px;font-size:21.3px;">à</b>
<i style="left:458px;top:886px;width:519.8px;height:10.7px;border:4.8px solid #2a2a2a;border-top:0"></i>
<b style="left:457.3px;top:904px;font-size:16px;">Commune</b>
<i style="left:1010px;top:886px;width:81.4px;height:10.7px;border:4.8px solid #2a2a2a;border-top:0"></i>
<i style="left:1037.6px;top:886px;width:4.8px;height:15.5px;background:#2a2a2a"></i>
<i style="left:1068px;top:886px;width:4.8px;height:15.5px;background:#2a2a2a"></i>
<b style="left:1012px;top:903.2px;font-size:16px;">Département</b>
<i style="left:1123px;top:886px;width:363.4px;height:10.7px;border:4.8px solid #2a2a2a;border-top:0"></i>
<b style="left:1124.3px;top:903.2px;font-size:16px;">Pays</b>
<b style="left:87.8px;top:930.6px;font-size:21px;font-weight:700;letter-spacing:1.6px;-webkit-text-stroke:0.9px #231f20;">Domicile</b>
<i style="left:222.6px;top:939.8px;width:622.3px;height:9.4px;border:4.8px solid #2a2a2a;border-top:0"></i>
<i style="left:868.5px;top:939.8px;width:617.9px;height:9.4px;border:4.8px solid #2a2a2a;border-top:0"></i>
<b style="left:223.3px;top:954.5px;font-size:16px;">Etage / Escalier / Appartement</b>
<b style="left:868.5px;top:954px;font-size:16px;">Immeuble / Résidence / Bâtiment</b>
<i style="left:225px;top:978.5px;width:107.4px;height:9.7px;border:4.8px solid #2a2a2a;border-top:0"></i>
<i style="left:354.4px;top:978.5px;width:124px;height:9.7px;border:4.8px solid #2a2a2a;border-top:0"></i>
<i style="left:503.7px;top:978.5px;width:196px;height:9.7px;border:4.8px solid #2a2a2a;border-top:0"></i>
<i style="left:726.8px;top:979.3px;width:759.6px;height:9.4px;border:4.8px solid #2a2a2a;border-top:0"></i>
<b style="left:223.3px;top:993.3px;font-size:16px;">N° de la voie</b>
<b style="left:356.8px;top:993.3px;font-size:16px;">Extension (bis, ter,...)</b>
<b style="left:517px;top:993.3px;font-size:16px;">Type de voie (avenue, etc.)</b>
<b style="left:735.6px;top:993.3px;font-size:16px;">Libellé de voie</b>
<i style="left:223.3px;top:1020.6px;width:682.1px;height:8.6px;border:4.8px solid #2a2a2a;border-top:0"></i>
<i style="left:927.4px;top:1019px;width:557.7px;height:10.2px;border:4.8px solid #2a2a2a;border-top:0"></i>
<b style="left:223.3px;top:1034.2px;font-size:16px;">Lieu-dit / BP / Localité (si différente de la commune)</b>
<b style="left:927px;top:1034px;font-size:16px;">Tél. portable (recommandé)</b>
<i style="left:223.3px;top:1063.5px;width:141.5px;height:8.7px;border:4.8px solid #2a2a2a;border-top:0"></i>
<i style="left:251.1px;top:1063.5px;width:4.8px;height:13.5px;background:#2a2a2a"></i>
<i style="left:281.6px;top:1063.5px;width:4.8px;height:13.5px;background:#2a2a2a"></i>
<i style="left:312.3px;top:1063.5px;width:4.8px;height:13.5px;background:#2a2a2a"></i>
<i style="left:342.1px;top:1063.5px;width:4.8px;height:13.5px;background:#2a2a2a"></i>
<i style="left:397.2px;top:1063.5px;width:508.2px;height:9.2px;border:4.8px solid #2a2a2a;border-top:0"></i>
<i style="left:927px;top:1063.6px;width:558.4px;height:9.1px;border:4.8px solid #2a2a2a;border-top:0"></i>
<b style="left:220.8px;top:1076.5px;font-size:16px;">Code postal</b>
<b style="left:399px;top:1076.5px;font-size:16px;">Commune</b>
<b style="left:927px;top:1075.5px;font-size:16px;">Mél (recommandé)</b>
<b style="left:87px;top:1093.7px;font-size:21.3px;">Dans le cas de multi-propriété, veuillez indiquer le nombre de personnes titulaires du certificat d’immatriculation</b>
<i style="left:1150px;top:1084.3px;width:71.9px;height:33.6px;border:2.5600000000000005px solid #333;background:#dfe3fc"></i>
<i style="left:1187.6px;top:1084.3px;width:1.6px;height:38.7px;background:#333;"></i>
<b style="left:87.5px;top:1128px;font-size:21px;font-weight:700;letter-spacing:1.0px;-webkit-text-stroke:0.9px #231f20;">Co-titulaire</b>
<b style="left:87px;top:1149.4px;font-size:15px;transform:scaleX(0.92);transform-origin:0 0;">le cas échéant</b>
<i style="left:219px;top:1133px;width:603.4px;height:10.2px;border:4.8px solid #2a2a2a;border-top:0"></i>
<i style="left:849px;top:1131.5px;width:347.4px;height:11.7px;border:4.8px solid #2a2a2a;border-top:0"></i>
<i style="left:1223.5px;top:1135px;width:262.9px;height:10.2px;border:4.8px solid #2a2a2a;border-top:0"></i>
<i style="left:1251.3px;top:1135px;width:4.8px;height:15px;background:#2a2a2a"></i>
<i style="left:1281.4px;top:1135px;width:4.8px;height:15px;background:#2a2a2a"></i>
<i style="left:1311.6px;top:1135px;width:4.8px;height:15px;background:#2a2a2a"></i>
<i style="left:1342.6px;top:1135px;width:4.8px;height:15px;background:#2a2a2a"></i>
<i style="left:1372.6px;top:1135px;width:4.8px;height:15px;background:#2a2a2a"></i>
<i style="left:1402.6px;top:1135px;width:4.8px;height:15px;background:#2a2a2a"></i>
<i style="left:1433.1px;top:1135px;width:4.8px;height:15px;background:#2a2a2a"></i>
<i style="left:1463.3px;top:1135px;width:4.8px;height:15px;background:#2a2a2a"></i>
<b style="left:223.3px;top:1153.7px;font-size:16px;">NOM DE NAISSANCE et PRÉNOM ou RAISON SOCIALE pour une personne morale</b>
<b style="left:848px;top:1154.5px;font-size:16px;">NOM D’USAGE (facultatif): nom d’époux (se)</b>
<b style="left:1223.5px;top:1150.9px;font-size:16px;">N° SIREN, le cas échéant</b>
<i style="left:75.3px;top:1189.7px;width:1436.7px;height:30px;background:#1d3f94;"></i>
<b style="left:91px;top:1191.3px;font-size:26.4px;font-weight:700;color:#fff;">LOUEUR</b>
<b style="left:210.8px;top:1195.9px;font-size:21.3px;font-weight:700;color:#fff;">(en cas de location ou crédit-bail)</b>
<b style="left:200.8px;top:1232.7px;font-size:21.1px;font-weight:700;">Personne physique</b>
<i style="left:413.4px;top:1235.2px;width:17.1px;height:17.6px;border:2.2399999999999998px solid #3b4a80;background:#dfe3fc"></i>
<b style="left:482.6px;top:1232.7px;font-size:21.1px;">Sexe :</b>
<b style="left:558px;top:1232.7px;font-size:21.1px;">M</b>
<i style="left:581.7px;top:1235.2px;width:17.6px;height:17.6px;border:2.2399999999999998px solid #3b4a80;background:#dfe3fc"></i>
<b style="left:639px;top:1232.7px;font-size:21.1px;">F</b>
<i style="left:657.6px;top:1235.2px;width:17.3px;height:17.6px;border:2.2399999999999998px solid #3b4a80;background:#dfe3fc"></i>
<b style="left:816px;top:1232.7px;font-size:21.1px;font-weight:700;">Personne morale</b>
<i style="left:1005.5px;top:1235.2px;width:16px;height:17.6px;border:2.2399999999999998px solid #3b4a80;background:#dfe3fc"></i>
<i style="left:1085.8px;top:1235.6px;width:263.6px;height:10.6px;border:4.8px solid #2a2a2a;border-top:0"></i>
<i style="left:1114.3px;top:1235.6px;width:4.8px;height:15.4px;background:#2a2a2a"></i>
<i style="left:1144.6px;top:1235.6px;width:4.8px;height:15.4px;background:#2a2a2a"></i>
<i style="left:1174.6px;top:1235.6px;width:4.8px;height:15.4px;background:#2a2a2a"></i>
<i style="left:1204.9px;top:1235.6px;width:4.8px;height:15.4px;background:#2a2a2a"></i>
<i style="left:1235.1px;top:1235.6px;width:4.8px;height:15.4px;background:#2a2a2a"></i>
<i style="left:1265.2px;top:1235.6px;width:4.8px;height:15.4px;background:#2a2a2a"></i>
<i style="left:1295.4px;top:1235.6px;width:4.8px;height:15.4px;background:#2a2a2a"></i>
<i style="left:1325.6px;top:1235.6px;width:4.8px;height:15.4px;background:#2a2a2a"></i>
<b style="left:1143px;top:1259.2px;font-size:16px;">N° SIREN, le cas échéant</b>
<i style="left:221.3px;top:1268px;width:793.1px;height:10.7px;border:4.8px solid #2a2a2a;border-top:0"></i>
<i style="left:1042px;top:1268px;width:444.4px;height:10.7px;border:4.8px solid #2a2a2a;border-top:0"></i>
<b style="left:219.5px;top:1288.3px;font-size:16px;">NOM DE NAISSANCE et PRÉNOM ou RAISON SOCIALE pour une personne morale</b>
<b style="left:1042px;top:1287.5px;font-size:16px;">NOM D’USAGE (facultatif) : nom d’époux (se)</b>
<i style="left:222.6px;top:1321.8px;width:622.3px;height:9.4px;border:4.8px solid #2a2a2a;border-top:0"></i>
<i style="left:868.5px;top:1321.8px;width:617.9px;height:9.4px;border:4.8px solid #2a2a2a;border-top:0"></i>
<b style="left:223.3px;top:1336.5px;font-size:16px;">Etage / Escalier / Appartement</b>
<b style="left:868.5px;top:1336px;font-size:16px;">Immeuble / Résidence / Bâtiment</b>
<i style="left:225px;top:1366px;width:107.4px;height:9.7px;border:4.8px solid #2a2a2a;border-top:0"></i>
<i style="left:354.4px;top:1366px;width:124px;height:9.7px;border:4.8px solid #2a2a2a;border-top:0"></i>
<i style="left:503.7px;top:1366px;width:196px;height:9.7px;border:4.8px solid #2a2a2a;border-top:0"></i>
<i style="left:726.8px;top:1366.8px;width:759.6px;height:9.4px;border:4.8px solid #2a2a2a;border-top:0"></i>
<b style="left:223.3px;top:1380.8px;font-size:16px;">N° de la voie</b>
<b style="left:356.8px;top:1380.8px;font-size:16px;">Extension (bis, ter,...)</b>
<b style="left:517px;top:1380.8px;font-size:16px;">Type de voie (avenue, etc.)</b>
<b style="left:735.6px;top:1380.8px;font-size:16px;">Libellé de voie</b>
<i style="left:223.3px;top:1413px;width:682.1px;height:8.6px;border:4.8px solid #2a2a2a;border-top:0"></i>
<i style="left:927.4px;top:1411.4px;width:557.7px;height:10.2px;border:4.8px solid #2a2a2a;border-top:0"></i>
<b style="left:223.3px;top:1426.6px;font-size:16px;">Lieu-dit / BP / Localité (si différente de la commune)</b>
<b style="left:927px;top:1426.4px;font-size:16px;">Tél. portable (recommandé)</b>
<i style="left:223.3px;top:1465.5px;width:141.5px;height:8.7px;border:4.8px solid #2a2a2a;border-top:0"></i>
<i style="left:251.1px;top:1465.5px;width:4.8px;height:13.5px;background:#2a2a2a"></i>
<i style="left:281.6px;top:1465.5px;width:4.8px;height:13.5px;background:#2a2a2a"></i>
<i style="left:312.3px;top:1465.5px;width:4.8px;height:13.5px;background:#2a2a2a"></i>
<i style="left:342.1px;top:1465.5px;width:4.8px;height:13.5px;background:#2a2a2a"></i>
<i style="left:397.2px;top:1465.5px;width:508.2px;height:9.2px;border:4.8px solid #2a2a2a;border-top:0"></i>
<i style="left:927px;top:1465.6px;width:558.4px;height:9.1px;border:4.8px solid #2a2a2a;border-top:0"></i>
<b style="left:220.8px;top:1478.5px;font-size:16px;">Code postal</b>
<b style="left:399px;top:1478.5px;font-size:16px;">Commune</b>
<b style="left:927px;top:1477.5px;font-size:16px;">Mél (recommandé)</b>
<i style="left:75.3px;top:1219.6px;width:3px;height:298.4px;background:#1d3f94;"></i>
<i style="left:1509px;top:1219.6px;width:3px;height:298.4px;background:#1d3f94;"></i>
<i style="left:75.3px;top:1518px;width:1436.7px;height:30px;background:#1d3f94;"></i>
<b style="left:91px;top:1519.6px;font-size:26.4px;font-weight:700;color:#fff;">LOCATAIRE</b>
<b style="left:251.5px;top:1524.2px;font-size:21.3px;font-weight:700;color:#fff;">(en cas de location longue durée ou crédit-bail)</b>
<b style="left:200.8px;top:1561px;font-size:21.1px;font-weight:700;">Personne physique</b>
<i style="left:413.4px;top:1563.5px;width:17.1px;height:17.6px;border:2.2399999999999998px solid #3b4a80;background:#dfe3fc"></i>
<b style="left:482.6px;top:1561px;font-size:21.1px;">Sexe :</b>
<b style="left:558px;top:1561px;font-size:21.1px;">M</b>
<i style="left:581.7px;top:1563.5px;width:17.6px;height:17.6px;border:2.2399999999999998px solid #3b4a80;background:#dfe3fc"></i>
<b style="left:639px;top:1561px;font-size:21.1px;">F</b>
<i style="left:657.6px;top:1563.5px;width:17.3px;height:17.6px;border:2.2399999999999998px solid #3b4a80;background:#dfe3fc"></i>
<b style="left:816px;top:1561px;font-size:21.1px;font-weight:700;">Personne morale</b>
<i style="left:1005.5px;top:1563.5px;width:16px;height:17.6px;border:2.2399999999999998px solid #3b4a80;background:#dfe3fc"></i>
<i style="left:1085.8px;top:1563.9px;width:263.6px;height:10.6px;border:4.8px solid #2a2a2a;border-top:0"></i>
<i style="left:1114.3px;top:1563.9px;width:4.8px;height:15.4px;background:#2a2a2a"></i>
<i style="left:1144.6px;top:1563.9px;width:4.8px;height:15.4px;background:#2a2a2a"></i>
<i style="left:1174.6px;top:1563.9px;width:4.8px;height:15.4px;background:#2a2a2a"></i>
<i style="left:1204.9px;top:1563.9px;width:4.8px;height:15.4px;background:#2a2a2a"></i>
<i style="left:1235.1px;top:1563.9px;width:4.8px;height:15.4px;background:#2a2a2a"></i>
<i style="left:1265.2px;top:1563.9px;width:4.8px;height:15.4px;background:#2a2a2a"></i>
<i style="left:1295.4px;top:1563.9px;width:4.8px;height:15.4px;background:#2a2a2a"></i>
<i style="left:1325.6px;top:1563.9px;width:4.8px;height:15.4px;background:#2a2a2a"></i>
<b style="left:1143px;top:1587.5px;font-size:16px;">N° SIREN, le cas échéant</b>
<i style="left:221.3px;top:1596.3px;width:793.1px;height:10.7px;border:4.8px solid #2a2a2a;border-top:0"></i>
<i style="left:1042px;top:1596.3px;width:444.4px;height:10.7px;border:4.8px solid #2a2a2a;border-top:0"></i>
<b style="left:219.5px;top:1616.6px;font-size:16px;">NOM DE NAISSANCE et PRÉNOM ou RAISON SOCIALE pour une personne morale</b>
<b style="left:1042px;top:1615.8px;font-size:16px;">NOM D’USAGE (facultatif) : nom d’époux (se)</b>
<i style="left:222.6px;top:1650.1px;width:622.3px;height:9.4px;border:4.8px solid #2a2a2a;border-top:0"></i>
<i style="left:868.5px;top:1650.1px;width:617.9px;height:9.4px;border:4.8px solid #2a2a2a;border-top:0"></i>
<b style="left:223.3px;top:1664.8px;font-size:16px;">Etage / Escalier / Appartement</b>
<b style="left:868.5px;top:1664.3px;font-size:16px;">Immeuble / Résidence / Bâtiment</b>
<i style="left:225px;top:1695.3px;width:107.4px;height:9.7px;border:4.8px solid #2a2a2a;border-top:0"></i>
<i style="left:354.4px;top:1695.3px;width:124px;height:9.7px;border:4.8px solid #2a2a2a;border-top:0"></i>
<i style="left:503.7px;top:1695.3px;width:196px;height:9.7px;border:4.8px solid #2a2a2a;border-top:0"></i>
<i style="left:726.8px;top:1696.1px;width:759.6px;height:9.4px;border:4.8px solid #2a2a2a;border-top:0"></i>
<b style="left:223.3px;top:1710.1px;font-size:16px;">N° de la voie</b>
<b style="left:356.8px;top:1710.1px;font-size:16px;">Extension (bis, ter,...)</b>
<b style="left:517px;top:1710.1px;font-size:16px;">Type de voie (avenue, etc.)</b>
<b style="left:735.6px;top:1710.1px;font-size:16px;">Libellé de voie</b>
<i style="left:223.3px;top:1743.3px;width:682.1px;height:8.6px;border:4.8px solid #2a2a2a;border-top:0"></i>
<i style="left:927.4px;top:1741.7px;width:557.7px;height:10.2px;border:4.8px solid #2a2a2a;border-top:0"></i>
<b style="left:223.3px;top:1756.9px;font-size:16px;">Lieu-dit / BP / Localité (si différente de la commune)</b>
<b style="left:927px;top:1756.7px;font-size:16px;">Tél. portable (recommandé)</b>
<i style="left:223.3px;top:1793.8px;width:141.5px;height:8.7px;border:4.8px solid #2a2a2a;border-top:0"></i>
<i style="left:251.1px;top:1793.8px;width:4.8px;height:13.5px;background:#2a2a2a"></i>
<i style="left:281.6px;top:1793.8px;width:4.8px;height:13.5px;background:#2a2a2a"></i>
<i style="left:312.3px;top:1793.8px;width:4.8px;height:13.5px;background:#2a2a2a"></i>
<i style="left:342.1px;top:1793.8px;width:4.8px;height:13.5px;background:#2a2a2a"></i>
<i style="left:397.2px;top:1793.8px;width:508.2px;height:9.2px;border:4.8px solid #2a2a2a;border-top:0"></i>
<i style="left:927px;top:1793.9px;width:558.4px;height:9.1px;border:4.8px solid #2a2a2a;border-top:0"></i>
<b style="left:220.8px;top:1806.8px;font-size:16px;">Code postal</b>
<b style="left:399px;top:1806.8px;font-size:16px;">Commune</b>
<b style="left:927px;top:1805.8px;font-size:16px;">Mél (recommandé)</b>
<i style="left:75.3px;top:1548px;width:3px;height:294px;background:#1d3f94;"></i>
<i style="left:1509px;top:1548px;width:3px;height:294px;background:#1d3f94;"></i>
<i style="left:75.3px;top:1841px;width:1070.1px;height:263.4px;border:4.800000000000001px solid #1d3f94;"></i>
<i style="left:433.5px;top:1841px;width:3px;height:203px;background:#1d3f94;"></i>
<i style="left:793px;top:1841px;width:3px;height:203px;background:#1d3f94;"></i>
<i style="left:75.3px;top:2041px;width:1079.7px;height:3px;background:#1d3f94;"></i>
<i style="left:1152px;top:1841px;width:350.4px;height:263.4px;border:4.800000000000001px solid #1d3f94;"></i>
<i style="left:1152px;top:1841px;width:360px;height:46px;background:#1d3f94;"></i>
<b style="left:1163px;top:1846.5px;font-size:16px;font-weight:700;color:#fff;">CADRE RÉSERVÉ À</b>
<b style="left:1163px;top:1866.5px;font-size:16px;font-weight:700;color:#fff;">L’ADMINISTRATION</b>
<b style="left:256px;top:1860px;font-size:21px;font-weight:700;transform:translateX(-50%);">Le titulaire</b>
<b style="left:614px;top:1860px;font-size:21px;font-weight:700;transform:translateX(-50%);">Le loueur</b>
<b style="left:974px;top:1860px;font-size:21px;font-weight:700;transform:translateX(-50%);">Le locataire</b>
<b style="left:614px;top:1888.4px;font-size:15px;transform:translateX(-50%);">(Société de location en cas de crédit-bail)</b>
<b style="left:974px;top:1888.4px;font-size:15px;transform:translateX(-50%);">(En location longue durée ou en crédit-bail)</b>
<b style="left:86px;top:1914.5px;font-size:16px;">Fait à : ……………………… Le : ……………………</b>
<b style="left:86px;top:1936.5px;font-size:16px;">Signature :</b>
<b style="left:446px;top:1914.5px;font-size:16px;">Fait à : ……………………… Le : ……………………</b>
<b style="left:446px;top:1936.5px;font-size:16px;">Signature :</b>
<b style="left:806px;top:1914.5px;font-size:16px;">Fait à : ……………………… Le : ……………………</b>
<b style="left:806px;top:1936.5px;font-size:16px;">Signature :</b>
<b style="left:446px;top:1960.3px;font-size:14px;">(Pour les sociétés: nom, qualité du signataire et cachet)</b>
<b style="left:806px;top:1960.3px;font-size:14px;">(Pour les sociétés: nom, qualité du signataire et cachet)</b>
<b style="left:614px;top:2057.4px;font-size:15px;transform:translateX(-50%);">Je m’oppose à la réutilisation de mes données personnelles à des fins de prospection commerciale**.</b>
<b style="left:398px;top:2078.4px;font-size:15px;">Le titulaire</b>
<b style="left:668px;top:2078.4px;font-size:15px;">Le loueur</b>
<b style="left:928px;top:2078.4px;font-size:15px;">Le locataire</b>
<b style="left:1163px;top:1907.2px;font-size:13px;">Autorisations particulières</b>
<b style="left:1163px;top:1930.2px;font-size:13px;">Rejet de la demande</b>
<b style="left:1163px;top:1953.2px;font-size:13px;">Motif :</b>
<b style="left:1163px;top:2000.2px;font-size:13px;">(Veuillez cocher la case correspondante)</b>
<b style="left:1163px;top:2022.2px;font-size:13px;">Oui        Non</b>
<b style="left:1163px;top:2044.2px;font-size:13px;">Mode d’expédition du titre :      Voie postale</b>
<b style="left:1163px;top:2067.2px;font-size:13px;">Remise à l’Imprimerie Nationale</b>
<b style="left:78px;top:2119.1px;font-size:12px;">*La loi n° 78-17 du 6 janvier 1978 relative à l’informatique, aux fichiers et aux libertés garantit un droit d’accès et de rectification des données auprès des services de l’État.</b>
<b style="left:78px;top:2133.1px;font-size:12px;">**Uniquement pour les personnes physiques</b>
</div>
<div style="position:absolute;left:0;top:271.5px;width:326px;height:180px;background:#e1e4e1;mix-blend-mode:multiply"></div>
</div>
<div style="position:absolute;left:157px;top:198px;width:320px;height:266px;border:4px solid #46a56b;border-radius:8px"></div>
<div style="position:absolute;left:2234.2px;top:77px;width:11.5px;height:816px;border-radius:6px;background:#666766"></div>
<div style="position:absolute;left:553px;top:81px;width:157px;height:77.5px;border-radius:16px;background:#e5e9e6;box-shadow:0 0 4px 2px rgba(0,0,0,0.075)"></div>
<div style="position:absolute;left:808px;top:81px;width:1176px;height:77.5px;border-radius:16px;background:#e5e9e6;box-shadow:0 0 4px 2px rgba(0,0,0,0.075)"></div>
<div style="position:absolute;left:2053px;top:81px;width:189px;height:77.5px;border-radius:16px;background:#e5e9e6;box-shadow:0 0 4px 2px rgba(0,0,0,0.075)"></div>
<svg style="position:absolute;left:574px;top:96px;" width="44" height="44" viewBox="0 0 40 40" fill="none" stroke="#1c2520" stroke-width="2.2" stroke-linecap="round" stroke-linejoin="round"><path d="M4 14.5 H36 V28 Q36 35.5 31 35.5 H9 Q4 35.5 4 28 Z"/><rect x="12.5" y="20.5" width="15" height="5" rx="2.5"/><path d="M4.5 14 L3 10.5 L7 9.5 L8.5 5.5 L11.5 8.5 L15.5 8 L14 12 L15 14"/><circle cx="20" cy="4.3" r="2.6"/><path d="M22 14 L27 7.5 L32 14"/></svg>
<div class="t" style="left:628px;top:107.5px;font-size:23.2px;font-weight:700;color:#1c2520">Outils</div>
<div style="position:absolute;left:816px;top:87.5px;width:64px;height:63.5px;border-radius:11px;background:#48a56c"></div>
<svg style="position:absolute;left:830px;top:99px;" width="40" height="40" viewBox="0 0 40 40" fill="none" stroke="#1c2520" stroke-width="2.6" stroke-linecap="round" stroke-linejoin="round"><path d="M4.5 3.5 L34 21.5 L21 24.5 L12.5 37 Z" stroke="#fff"/></svg>
<svg style="position:absolute;left:886px;top:113.5px" width="16.5" height="10.8" viewBox="-2 -2 16.5 10.8" fill="none" stroke="#1c2520" stroke-width="2.2" stroke-linecap="round" stroke-linejoin="round"><path d="M0 0 L6.25 6.8 L12.5 0"/></svg>
<div style="position:absolute;left:924.5px;top:107px;width:2px;height:24px;background:#cdd3ce"></div>
<svg style="position:absolute;left:955px;top:100px;" width="40" height="40" viewBox="0 0 40 40" fill="none" stroke="#1c2520" stroke-width="2.2" stroke-linecap="round" stroke-linejoin="round"><rect x="2.6" y="2.3" width="33" height="33" rx="6.5"/><path d="M9.9 7.8 V30 M28.2 7.8 V30 M9.9 19 H28.2 M6.5 7.8 H13.3 M24.8 7.8 H31.6 M6.5 30 H13.3 M24.8 30 H31.6"/></svg>
<svg style="position:absolute;left:1011.5px;top:113.5px" width="16.5" height="10.8" viewBox="-2 -2 16.5 10.8" fill="none" stroke="#1c2520" stroke-width="2.2" stroke-linecap="round" stroke-linejoin="round"><path d="M0 0 L6.25 6.8 L12.5 0"/></svg>
<svg style="position:absolute;left:1059px;top:100px;" width="44" height="38" viewBox="0 0 44 38" fill="none" stroke="#1c2520" stroke-width="2.2" stroke-linecap="round" stroke-linejoin="round"><path d="M4.3 14.7 V7.5 Q4.3 3.6 8.3 3.6 H36.7 Q40.7 3.6 40.7 7.5 V14.7 M22.5 3.6 V34.1 M13.5 34.1 H31.5"/></svg>
<svg style="position:absolute;left:1119.5px;top:113.5px" width="16.5" height="10.8" viewBox="-2 -2 16.5 10.8" fill="none" stroke="#1c2520" stroke-width="2.2" stroke-linecap="round" stroke-linejoin="round"><path d="M0 0 L6.25 6.8 L12.5 0"/></svg>
<svg style="position:absolute;left:1168px;top:99px;" width="42" height="40" viewBox="0 0 42 40" fill="none" stroke="#1c2520" stroke-width="2.4" stroke-linecap="round" stroke-linejoin="round"><path d="M20 3 C30.5 3 38 10.5 38 19 C38 26 35.5 30 31.5 32.5 L38.5 37.2 H20 C10 37 2.5 29.5 2.5 19 C2.5 10.5 10 3 20 3 Z"/><path d="M13 15.5 H27 M13 23 H21.5"/></svg>
<svg style="position:absolute;left:1251px;top:97px;" width="42" height="44" viewBox="0 0 42 44" fill="none" stroke="#1c2520" stroke-width="2.2" stroke-linecap="round" stroke-linejoin="round"><path d="M7.3 18.5 L17 5.5 Q21 1 26 4.5 L34 10.5 Q38.5 14 35 18.5 L25.5 31.5 L6.8 40 Q4 41.2 4.2 38 Z"/><path d="M7.3 19.8 Q11.5 17.5 14 22.5 Q16 27 19.5 27 Q23.5 27.5 25.3 31.2"/><path d="M5.2 33.5 L14 37.5"/></svg>
<div style="position:absolute;left:1334.5px;top:104px;width:26px;height:25.5px;border:2.6px solid #1c2520"></div>
<svg style="position:absolute;left:1387.8px;top:113.5px" width="16.5" height="10.8" viewBox="-2 -2 16.5 10.8" fill="none" stroke="#1c2520" stroke-width="2.2" stroke-linecap="round" stroke-linejoin="round"><path d="M0 0 L6.25 6.8 L12.5 0"/></svg>
<svg style="position:absolute;left:1435px;top:96px;" width="44" height="44" viewBox="0 0 44 44" fill="none" stroke="#1c2520" stroke-width="2.2" stroke-linecap="round" stroke-linejoin="round"><path d="M3.5 4.5 V12 M40.5 4.5 V12 M3.5 8.3 H40.5"/><rect x="3.5" y="20.2" width="37" height="19" rx="5"/><path d="M3.5 33 H40.5 M11.8 20.2 V24 M17.5 20.2 V24 M23.3 20.2 V25 M30 20.2 V24 M35.7 20.2 V24"/></svg>
<svg style="position:absolute;left:1495.5px;top:113.5px" width="16.5" height="10.8" viewBox="-2 -2 16.5 10.8" fill="none" stroke="#1c2520" stroke-width="2.2" stroke-linecap="round" stroke-linejoin="round"><path d="M0 0 L6.25 6.8 L12.5 0"/></svg>
<svg style="position:absolute;left:1549px;top:97.5px;" width="42" height="44" viewBox="1 1 45 47" fill="none" stroke="#1c2520" stroke-width="2.2" stroke-linecap="round" stroke-linejoin="round"><path d="M12 20.5 L28.5 7.5 Q34.5 3 38.8 7.5 Q43 12.5 38 17.5 L15.5 40.5 Q10.5 45 6.5 41 Q3 37 7.5 32 L29.7 14.8"/></svg>
<svg style="position:absolute;left:1626px;top:99px;" width="40" height="40" viewBox="0 0 40 40" fill="none" stroke="#1c2520" stroke-width="2.2" stroke-linecap="round" stroke-linejoin="round"><path d="M35.5 22 V10 Q35.5 2.5 28 2.5 H10 Q2.5 2.5 2.5 10 V29.5 Q2.5 37 10 37 H21.5 Q35.5 37 35.5 22 Z"/><path d="M21.5 37 Q22 30 25 27 Q28.5 23.5 35.5 22"/><circle cx="14" cy="14" r="1.2" fill="#1c2520"/><circle cx="26.4" cy="14" r="1.2" fill="#1c2520"/><path d="M12 23.5 Q15.5 28 22 26.5"/></svg>
<svg style="position:absolute;left:1705px;top:96px;" width="42" height="44" viewBox="0 0 42 44" fill="none" stroke="#1c2520" stroke-width="2.2" stroke-linecap="round" stroke-linejoin="round"><circle cx="20.7" cy="13" r="8.8"/><path d="M18.2 22 V27.4 M23.3 22 V27.4 M7 39.8 H34.8"/><rect x="4.5" y="27.4" width="33" height="9" rx="4.5"/></svg>
<svg style="position:absolute;left:1778px;top:95px;" width="56" height="46" viewBox="0 0 56 46" fill="none" stroke="#1c2520" stroke-width="2.1" stroke-linecap="round" stroke-linejoin="round"><path d="M4 20 L11.5 27 M11.5 20 L4 27"/><path d="M4 32.8 H53.3"/><path d="M17.9 27.4 Q28 22 32 12 Q34.5 4.5 36 5 Q38.5 6.5 33 20 Q26.5 36 21.5 41.5 Q18.5 44 18.5 38 Q19 30 26.5 25.5 L32.2 28.4 L39.9 23.6 L41.8 28.4 L53.3 22.6"/></svg>
<div style="position:absolute;left:1854.5px;top:107px;width:2px;height:24px;background:#cdd3ce"></div>
<div style="position:absolute;left:1873.5px;top:87.5px;width:104px;height:63px;border-radius:12px;background:#d9dfda"></div>
<div class="t" style="left:1889.5px;top:107.5px;font-size:22.2px;color:#1c2520">Fermer</div>
<svg style="position:absolute;left:2080px;top:99px;" width="36" height="40" viewBox="0 0 36 40" fill="none" stroke="#1c2520" stroke-width="2.4" stroke-linecap="round" stroke-linejoin="round"><path d="M9 2.5 H27 Q33.5 2.5 33.5 9 V30 Q33.5 36.5 27 36.5 H9 Q2.5 36.5 2.5 30 V9 Q2.5 2.5 9 2.5 Z"/><path d="M11 2.5 V7 Q11 10.5 14.5 10.5 H21.5 Q25 10.5 25 7 V2.5"/><circle cx="18" cy="22" r="4.5"/></svg>
<svg style="position:absolute;left:2135.8px;top:113.5px" width="16.8" height="11" viewBox="-2 -2 16.8 11" fill="none" stroke="#1c2520" stroke-width="2.2" stroke-linecap="round" stroke-linejoin="round"><path d="M0 0 L6.4 7 L12.8 0"/></svg>
<div style="position:absolute;left:2174px;top:94px;width:47px;height:46px;border-radius:48% 52% 50% 50%;background:linear-gradient(155deg,#8068ee 0%,#5a82f4 40%,#4aa8f6 70%,#48c6f0 100%);box-shadow:0 0 3px rgba(90,120,240,0.35)"></div>
<svg style="position:absolute;left:2177px;top:97px" width="41" height="40" viewBox="0 0 41 40" fill="none" stroke="#fff" stroke-width="2" stroke-linecap="round"><ellipse cx="20.5" cy="20" rx="14" ry="6.5" transform="rotate(40 20.5 20)"/><ellipse cx="20.5" cy="20" rx="14" ry="6.5" transform="rotate(-40 20.5 20)"/><path d="M20.5 15.5 L21.7 18.8 L25 20 L21.7 21.2 L20.5 24.5 L19.3 21.2 L16 20 L19.3 18.8 Z" fill="#fff" stroke-width="0.8"/></svg>
<div style="position:absolute;left:1398px;top:1405px;width:842px;height:80px;border-radius:18px;background:#e3e8e4;box-shadow:0 0 6px 1px rgba(0,0,0,0.10)"></div>
<div style="position:absolute;left:1414px;top:1428.5px;width:32px;height:32px;border-radius:50%;background:#cdd5cf"></div>
<svg style="position:absolute;left:1424px;top:1436px" width="11" height="17" viewBox="-2 -2 11 17" fill="none" stroke="#1c2520" stroke-width="2.2" stroke-linecap="round" stroke-linejoin="round"><path d="M0 0 L7 6.5 L0 13"/></svg>
<svg style="position:absolute;left:1472px;top:1427px;" width="42" height="36" viewBox="0 0 42 36" fill="none" stroke="#1c2520" stroke-width="2" stroke-linecap="butt" stroke-linejoin="round"><rect x="3.25" y="2.95" width="35.5" height="29.9" rx="5.5"/><path d="M21 2.95 V32.85 M8.3 11 H15.7 M8.3 17 H15.7 M8.3 22.9 H11.7 M26.3 11 H33.8 M26.3 17 H33.8 M26.3 22.9 H29.7"/></svg>
<svg style="position:absolute;left:1551px;top:1426px;" width="46" height="40" viewBox="0 0 46 40" fill="none" stroke="#1c2520" stroke-width="2" stroke-linecap="butt" stroke-linejoin="round"><path d="M16.7 28 H9 Q4 28 4 23 V9 Q4 4 9 4 H37.6 Q42.6 4 42.6 9 V23 Q42.6 28 37.6 28 H29.2"/><path d="M23 27.6 L28 35.6 H18 Z"/></svg>
<div style="position:absolute;left:1622px;top:1434px;width:1.8px;height:24px;background:#cdd3ce"></div>
<div style="position:absolute;left:1640.5px;top:1413.5px;width:59.5px;height:59.5px;border-radius:13px;border:2.2px solid #4c9d6d;background:#eff1ef"></div>
<svg style="position:absolute;left:1664px;top:1433px" width="14" height="28" viewBox="0 0 14 28" fill="none" stroke="#111814" stroke-width="3" stroke-linejoin="miter"><path d="M1.8 8.8 L10.6 3 V25.3"/></svg>
<svg style="position:absolute;left:1741px;top:1435.5px" width="23" height="13.5" viewBox="-2 -2 23 13.5" fill="none" stroke="#9aa29c" stroke-width="2.1" stroke-linecap="round" stroke-linejoin="round"><path d="M0 9.5 L9.5 0 L19 9.5"/></svg>
<svg style="position:absolute;left:1821px;top:1439px" width="23" height="13.5" viewBox="-2 -2 23 13.5" fill="none" stroke="#9aa29c" stroke-width="2.1" stroke-linecap="round" stroke-linejoin="round"><path d="M0 0 L9.5 9.5 L19 0"/></svg>
<div style="position:absolute;left:1880px;top:1434px;width:1.8px;height:24px;background:#cdd3ce"></div>
<div style="position:absolute;left:1900px;top:1418px;width:92px;height:53px;border-radius:15px;background:#eef0ee"></div>
<div class="t" style="left:1920px;top:1434.5px;font-size:21.6px;color:#1c2520">100%</div>
<div style="position:absolute;left:2029px;top:1443px;width:23px;height:2.4px;background:#1c2520"></div>
<div style="position:absolute;left:2109.5px;top:1443px;width:23px;height:2.4px;background:#1c2520"></div>
<div style="position:absolute;left:2120px;top:1432.5px;width:2.4px;height:23px;background:#1c2520"></div>
<div style="position:absolute;left:2184.5px;top:1429.5px;width:30.5px;height:25.5px;border:2.3px solid #1c2520;border-radius:7px"></div>
<div class="t" style="left:2191px;top:1434.5px;font-size:16px;font-weight:700;color:#1c2520;letter-spacing:-0.3px">1:1</div>
</body></html>
